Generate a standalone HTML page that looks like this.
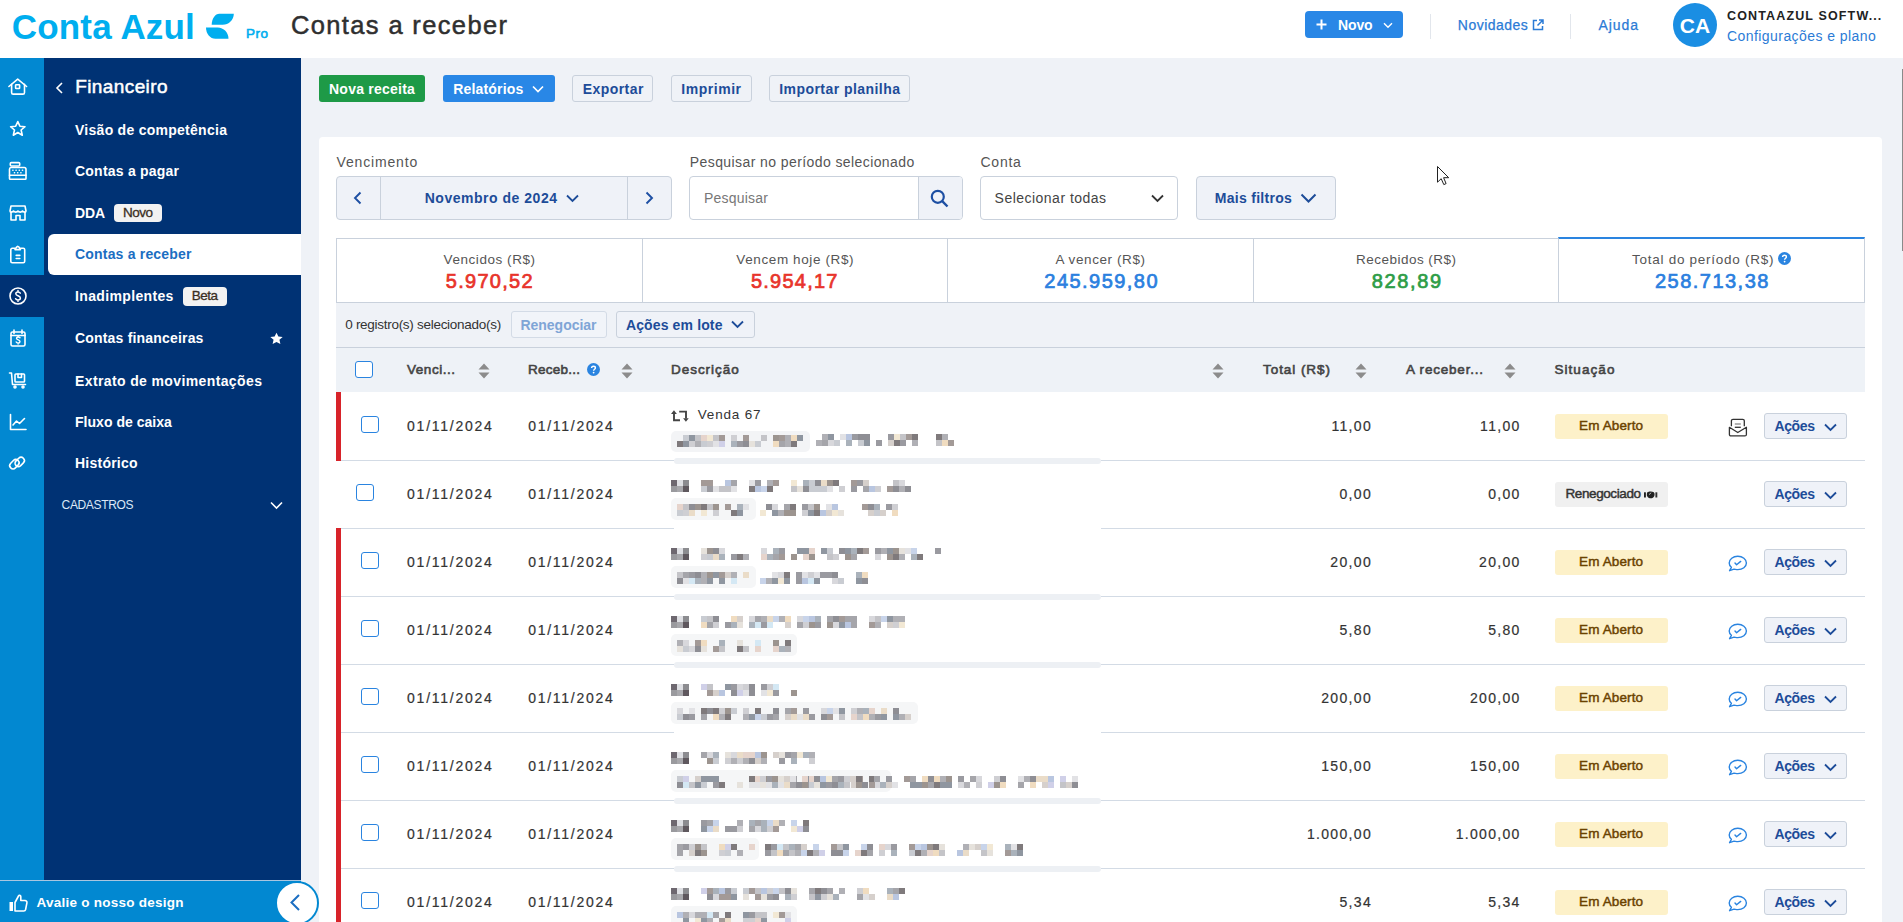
<!DOCTYPE html><html><head><meta charset="utf-8"><title>Contas a receber</title><style>
*{box-sizing:border-box;margin:0;padding:0}
html,body{width:1903px;height:922px;overflow:hidden;background:#eff2f7;font-family:"Liberation Sans",sans-serif}
.t{position:absolute;line-height:1;white-space:nowrap}
.r{position:absolute}
svg{position:absolute;overflow:visible}
</style></head><body><div class="r" style="left:0px;top:0px;width:1903px;height:58px;background:#ffffff;"></div><div class="r" style="left:0px;top:58px;width:44px;height:864px;background:#0288d1;"></div><div class="r" style="left:44px;top:58px;width:257px;height:864px;background:#003274;"></div><div class="r" style="left:0px;top:275px;width:44px;height:42px;background:#003274;"></div><div class="t" style="left:11.8px;top:8.85px;font-size:35px;color:#00aeef;font-weight:bold;letter-spacing:0.167px;">Conta Azul</div><svg style="left:0px;top:0px" width="1" height="1"><path d="M219.3 13.7H233.8C233.8 19.8 228.8 24.7 222.6 24.7H211.7C211.7 18.5 215.4 13.7 219.3 13.7Z" fill="#00aeef"/><path d="M206 27.4H217.6C223.8 27.4 228.5 32.4 228.5 38.7H215.5C210 38.7 206 33.6 206 27.4Z" fill="#00aeef"/></svg><div class="t" style="left:246.0px;top:27.23px;font-size:13.5px;color:#00aeef;font-weight:normal;letter-spacing:0.5px;-webkit-text-stroke:0.6px #00aeef">Pro</div><div class="t" style="left:291.0px;top:13.03px;font-size:25.5px;color:#2f2f2f;font-weight:normal;letter-spacing:1.358px;-webkit-text-stroke:0.5px #2f2f2f">Contas a receber</div><div class="r" style="left:1305px;top:11px;width:98px;height:27px;background:#2987e6;border-radius:4px"></div><svg style="left:1316px;top:19px" width="11" height="11" viewBox="0 0 11 11"><path d="M5.5 0.5V10.5M0.5 5.5H10.5" stroke="#fff" stroke-width="2"/></svg><div class="t" style="left:1338.0px;top:18.10px;font-size:14px;color:#fff;font-weight:bold;letter-spacing:-0.133px;">Novo</div><svg style="left:1383px;top:22px" width="10" height="7" viewBox="0 0 10 7"><path d="M1 1.2L5 5.2L9 1.2" stroke="#fff" stroke-width="1.4" fill="none"/></svg><div class="r" style="left:1430px;top:14px;width:1px;height:25px;background:#e2e6ec;"></div><div class="t" style="left:1457.8px;top:18.10px;font-size:14px;color:#2b7bd6;font-weight:normal;letter-spacing:0.484px;-webkit-text-stroke:0.25px #2b7bd6">Novidades</div><svg style="left:1532px;top:19px" width="12" height="12" viewBox="0 0 12 12"><path d="M5 1.5H1.5V10.5H10.5V7" stroke="#2b7bd6" stroke-width="1.5" fill="none"/><path d="M7 1H11V5M11 1L5.5 6.5" stroke="#2b7bd6" stroke-width="1.5" fill="none"/></svg><div class="r" style="left:1570px;top:14px;width:1px;height:25px;background:#e2e6ec;"></div><div class="t" style="left:1598.5px;top:18.10px;font-size:14px;color:#2b7bd6;font-weight:normal;letter-spacing:0.906px;-webkit-text-stroke:0.25px #2b7bd6">Ajuda</div><div class="r" style="left:1673px;top:3px;width:44px;height:44px;background:#1a8ee3;border-radius:50%"></div><div class="t" style="left:1395px;width:600px;text-align:center;top:15.15px;font-size:21px;color:#fff;font-weight:bold;">CA</div><div class="t" style="left:1727.0px;top:9.98px;font-size:12.5px;color:#222;font-weight:bold;letter-spacing:1.141px;">CONTAAZUL SOFTW...</div><div class="t" style="left:1727.0px;top:28.60px;font-size:14px;color:#2b7bd6;font-weight:normal;letter-spacing:0.434px;">Configurações e plano</div><svg style="left:8px;top:77px" width="20" height="20" viewBox="0 0 20 20" fill="none" stroke="#ffffff" stroke-width="1.6" stroke-linejoin="round" stroke-linecap="round"><path d="M0.9 9.5L9.7 2.2L18.6 9.5"/><path d="M3.6 7.3V15.4C3.6 16.3 4.3 17.1 5.2 17.1H14.9C15.8 17.1 16.5 16.3 16.5 15.4V7.3"/><rect x="7.6" y="7.7" width="4" height="3.8" rx="0.6"/></svg><svg style="left:8px;top:119px" width="20" height="20" viewBox="0 0 20 20" fill="none" stroke="#ffffff" stroke-width="1.6" stroke-linejoin="round" stroke-linecap="round"><path d="M9.8 2.6L11.9 7.2L17 7.7L13.1 11L14.3 16.2L9.8 13.5L5.3 16.2L6.5 11L2.6 7.7L7.7 7.2Z"/></svg><svg style="left:8px;top:161px" width="20" height="20" viewBox="0 0 20 20" fill="none" stroke="#ffffff" stroke-width="1.6" stroke-linejoin="round" stroke-linecap="round"><rect x="2.3" y="1.6" width="9.4" height="3.4" rx="1"/><path d="M3 6.5H16.3C17.2 6.5 18 7.3 18 8.2V17.5C18 18 17.6 18.3 17.2 18.3H2.3C1.9 18.3 1.5 18 1.5 17.5V8.2C1.5 7.3 2.2 6.5 3 6.5Z"/><path d="M1.5 14.3H18"/><path d="M4.8 9.3h0.2M8 9.3h0.2M11.2 9.3h0.2M14.4 9.3h0.2M6.4 11.7h0.2M9.6 11.7h0.2M12.8 11.7h0.2" stroke-width="1.5"/></svg><svg style="left:8px;top:203px" width="20" height="20" viewBox="0 0 20 20" fill="none" stroke="#ffffff" stroke-width="1.6" stroke-linejoin="round" stroke-linecap="round"><path d="M3 3H17L18 8C18 9.5 15.5 9.5 14.5 8C13.5 9.5 11 9.5 10 8C9 9.5 6.5 9.5 5.5 8C4.5 9.5 2 9.5 2 8Z"/><path d="M3 9V17H8V12.5H12V17H17V9"/></svg><svg style="left:8px;top:244px" width="20" height="20" viewBox="0 0 20 20" fill="none" stroke="#ffffff" stroke-width="1.6" stroke-linejoin="round" stroke-linecap="round"><path d="M7 4.3H4.2C3.4 4.3 2.8 4.9 2.8 5.7V17.3C2.8 18.1 3.4 18.7 4.2 18.7H15.3C16.1 18.7 16.7 18.1 16.7 17.3V5.7C16.7 4.9 16.1 4.3 15.3 4.3H12.5"/><path d="M7 5.6H12.5L11 3.2L9.7 2.3L8.5 3.2Z"/><path d="M8.2 11.4H11.8M8.2 14.5H11.8"/></svg><svg style="left:8px;top:286px" width="20" height="20" viewBox="0 0 20 20" fill="none" stroke="#ffffff" stroke-width="1.6" stroke-linejoin="round" stroke-linecap="round"><circle cx="10" cy="10" r="8"/><path d="M12.3 7.2C11.8 6.4 11 6 10 6C8.7 6 7.8 6.7 7.8 7.8C7.8 10.2 12.4 9.3 12.4 12C12.4 13.2 11.4 14 10 14C8.9 14 8 13.5 7.6 12.7M10 4.5V6M10 14V15.5" stroke-width="1.5"/></svg><svg style="left:8px;top:328px" width="20" height="20" viewBox="0 0 20 20" fill="none" stroke="#ffffff" stroke-width="1.6" stroke-linejoin="round" stroke-linecap="round"><rect x="3" y="4" width="14" height="14" rx="1.5"/><path d="M6 2V5.5M14 2V5.5M3 7.5H17"/><path d="M12 9.8C11.6 9.3 11 9 10.2 9C9.2 9 8.5 9.5 8.5 10.3C8.5 12.2 12 11.5 12 13.4C12 14.3 11.2 15 10.1 15C9.2 15 8.5 14.6 8.2 14M10.1 8V9M10.1 15V16" stroke-width="1.4"/></svg><svg style="left:8px;top:370px" width="20" height="20" viewBox="0 0 20 20" fill="none" stroke="#ffffff" stroke-width="1.6" stroke-linejoin="round" stroke-linecap="round"><path d="M1.5 3H3.5L4.5 14.5H17.5"/><rect x="7" y="4" width="9.5" height="8" rx="0.8"/><path d="M10 4V7.5H13.5V4" /><circle cx="7" cy="17" r="1" /><circle cx="15" cy="17" r="1"/></svg><svg style="left:8px;top:412px" width="20" height="20" viewBox="0 0 20 20" fill="none" stroke="#ffffff" stroke-width="1.6" stroke-linejoin="round" stroke-linecap="round"><path d="M2.5 2.5V17.5H18"/><path d="M5 13L8.5 9L11.5 11.5L16.5 6.5"/></svg><svg style="left:8px;top:454px" width="20" height="20" viewBox="0 0 20 20" fill="none" stroke="#ffffff" stroke-width="1.6" stroke-linejoin="round" stroke-linecap="round"><rect x="1.2" y="6.9" width="10.4" height="6.6" rx="3.3" transform="rotate(-45 6.4 10.2)"/><rect x="6.5" y="4.6" width="10.4" height="6.6" rx="3.3" transform="rotate(-45 11.7 7.9)"/></svg><svg style="left:55px;top:81.5px" width="9" height="12" viewBox="0 0 9 12"><path d="M7 1L2 6L7 11" stroke="#fff" stroke-width="1.6" fill="none"/></svg><div class="t" style="left:75.2px;top:76.95px;font-size:19px;color:#fff;font-weight:normal;letter-spacing:0.406px;-webkit-text-stroke:0.5px #fff">Financeiro</div><div class="r" style="left:48px;top:234px;width:253px;height:41px;background:#ffffff;border-radius:6px 0 0 6px"></div><div class="t" style="left:75.0px;top:122.50px;font-size:14px;color:#ffffff;font-weight:bold;letter-spacing:0.27px;">Visão de competência</div><div class="t" style="left:75.0px;top:164.30px;font-size:14px;color:#ffffff;font-weight:bold;letter-spacing:0.221px;">Contas a pagar</div><div class="t" style="left:75.0px;top:206.20px;font-size:14px;color:#ffffff;font-weight:bold;letter-spacing:-0.088px;">DDA</div><div class="t" style="left:75.0px;top:247.10px;font-size:14px;color:#1b6ec2;font-weight:bold;letter-spacing:0.192px;">Contas a receber</div><div class="t" style="left:75.0px;top:289.10px;font-size:14px;color:#ffffff;font-weight:bold;letter-spacing:0.356px;">Inadimplentes</div><div class="t" style="left:75.0px;top:330.90px;font-size:14px;color:#ffffff;font-weight:bold;letter-spacing:0.185px;">Contas financeiras</div><div class="t" style="left:75.0px;top:373.50px;font-size:14px;color:#ffffff;font-weight:bold;letter-spacing:0.38px;">Extrato de movimentações</div><div class="t" style="left:75.0px;top:415.10px;font-size:14px;color:#ffffff;font-weight:bold;letter-spacing:0.029px;">Fluxo de caixa</div><div class="t" style="left:75.0px;top:456.10px;font-size:14px;color:#ffffff;font-weight:bold;letter-spacing:0.234px;">Histórico</div><div class="r" style="left:114px;top:204px;width:48px;height:18px;background:#f2f2f2;border-radius:4px"></div><div class="t" style="left:123.0px;top:205.83px;font-size:13.5px;color:#3a2e22;font-weight:normal;letter-spacing:-0.5px;-webkit-text-stroke:0.3px #3a2e22">Novo</div><div class="r" style="left:183px;top:287px;width:44px;height:19px;background:#f2f2f2;border-radius:4px"></div><div class="t" style="left:191.8px;top:289.02px;font-size:13.5px;color:#3a2e22;font-weight:normal;letter-spacing:-0.558px;-webkit-text-stroke:0.3px #3a2e22">Beta</div><svg style="left:270px;top:331.5px" width="13" height="13" viewBox="0 0 20 20"><path d="M10 1L12.9 7.1L19.5 7.6L14.5 12L16 18.6L10 15.2L4 18.6L5.5 12L0.5 7.6L7.1 7.1Z" fill="#fff"/></svg><div class="t" style="left:61.6px;top:498.80px;font-size:12px;color:#dbe8f7;font-weight:normal;letter-spacing:-0.353px;">CADASTROS</div><svg style="left:270px;top:501px" width="13" height="9" viewBox="0 0 13 9"><path d="M1 1.5L6.5 7L12 1.5" stroke="#fff" stroke-width="1.6" fill="none"/></svg><div class="r" style="left:0px;top:880px;width:301px;height:42px;background:#0288d1;border-top:1px solid #a9c6e0"></div><svg style="left:9px;top:894px" width="19" height="18" viewBox="0 0 19 18"><rect x="0.5" y="8" width="3.5" height="9" fill="#fff"/><path d="M6 8.5L9.5 2C10 1 11.8 1.2 11.8 2.6V6.5H16C17.3 6.5 18.2 7.6 17.9 8.8L16.6 15.5C16.4 16.4 15.7 17 14.8 17H6Z" stroke="#fff" stroke-width="1.6" fill="none" stroke-linejoin="round"/></svg><div class="t" style="left:36.4px;top:895.82px;font-size:13.5px;color:#fff;font-weight:bold;letter-spacing:0.25px;">Avalie o nosso design</div><svg style="left:275px;top:881px" width="44" height="44" viewBox="0 0 44 44"><circle cx="22" cy="22" r="21" fill="#fff" stroke="#0288d1" stroke-width="2"/><path d="M24 14L16.5 21.5L24 29" stroke="#1b6ec2" stroke-width="2" fill="none"/></svg><div class="r" style="left:319px;top:75px;width:106px;height:27px;background:#1e9a47;border-radius:3px"></div><div class="t" style="left:329.0px;top:81.64px;font-size:14px;color:#fff;font-weight:bold;letter-spacing:0.239px;">Nova receita</div><div class="r" style="left:443px;top:75px;width:112px;height:27px;background:#2987e6;border-radius:3px"></div><div class="t" style="left:453.3px;top:81.64px;font-size:14px;color:#fff;font-weight:bold;letter-spacing:0.167px;">Relatórios</div><svg style="left:532px;top:85.0px" width="12" height="8" viewBox="0 0 12 8"><path d="M1 1.5L6 6.5L11 1.5" stroke="#fff" stroke-width="1.7" fill="none"/></svg><div class="r" style="left:572px;top:75px;width:81px;height:27px;background:#eff2f7;border:1px solid #c9d1dc;border-radius:3px"></div><div class="t" style="left:582.7px;top:81.64px;font-size:14px;color:#1d4c99;font-weight:bold;letter-spacing:0.439px;">Exportar</div><div class="r" style="left:671px;top:75px;width:81px;height:27px;background:#eff2f7;border:1px solid #c9d1dc;border-radius:3px"></div><div class="t" style="left:681.3px;top:81.64px;font-size:14px;color:#1d4c99;font-weight:bold;letter-spacing:0.529px;">Imprimir</div><div class="r" style="left:769px;top:75px;width:141px;height:27px;background:#eff2f7;border:1px solid #c9d1dc;border-radius:3px"></div><div class="t" style="left:779.2px;top:81.64px;font-size:14px;color:#1d4c99;font-weight:bold;letter-spacing:0.448px;">Importar planilha</div><div class="r" style="left:319px;top:137px;width:1563px;height:800px;background:#ffffff;border-radius:4px"></div><div class="t" style="left:336.5px;top:155.30px;font-size:14px;color:#555;font-weight:normal;letter-spacing:0.842px;">Vencimento</div><div class="t" style="left:689.8px;top:155.30px;font-size:14px;color:#555;font-weight:normal;letter-spacing:0.411px;">Pesquisar no período selecionado</div><div class="t" style="left:980.5px;top:155.30px;font-size:14px;color:#555;font-weight:normal;letter-spacing:0.75px;">Conta</div><div class="r" style="left:336px;top:176px;width:336px;height:44px;background:#eff2f8;border:1px solid #c9d1dc;border-radius:4px"></div><div class="r" style="left:380px;top:177px;width:1px;height:42px;background:#c9d1dc;"></div><div class="r" style="left:627px;top:177px;width:1px;height:42px;background:#c9d1dc;"></div><svg style="left:353px;top:191px" width="9" height="14" viewBox="0 0 9 14"><path d="M7.5 1.5L2 7L7.5 12.5" stroke="#1d4fa3" stroke-width="1.9" fill="none"/></svg><svg style="left:645px;top:191px" width="9" height="14" viewBox="0 0 9 14"><path d="M1.5 1.5L7 7L1.5 12.5" stroke="#1d4fa3" stroke-width="1.9" fill="none"/></svg><div class="t" style="left:424.7px;top:191.10px;font-size:14px;color:#1d4c99;font-weight:bold;letter-spacing:0.52px;">Novembro de 2024</div><svg style="left:566px;top:194px" width="13" height="9" viewBox="0 0 13 9"><path d="M1 1.5L6.5 7L12 1.5" stroke="#1d4c99" stroke-width="1.8" fill="none"/></svg><div class="r" style="left:689px;top:176px;width:274px;height:44px;background:#ffffff;border:1px solid #c9d1dc;border-radius:4px"></div><div class="r" style="left:918px;top:177px;width:44px;height:42px;background:#eff2f8;border-left:1px solid #c9d1dc;border-radius:0 3px 3px 0"></div><div class="t" style="left:704.0px;top:191.10px;font-size:14px;color:#777;font-weight:normal;letter-spacing:0.219px;">Pesquisar</div><svg style="left:930px;top:189px" width="19" height="19" viewBox="0 0 19 19"><circle cx="7.8" cy="7.8" r="6" stroke="#1d4fa3" stroke-width="2.2" fill="none"/><path d="M12.2 12.2L17.5 17.5" stroke="#1d4fa3" stroke-width="2.4"/></svg><div class="r" style="left:980px;top:176px;width:198px;height:44px;background:#ffffff;border:1px solid #c9d1dc;border-radius:4px"></div><div class="t" style="left:994.6px;top:191.10px;font-size:14px;color:#444;font-weight:normal;letter-spacing:0.477px;">Selecionar todas</div><svg style="left:1151px;top:194px" width="13" height="9" viewBox="0 0 13 9"><path d="M1 1.5L6.5 7L12 1.5" stroke="#333" stroke-width="1.8" fill="none"/></svg><div class="r" style="left:1196px;top:176px;width:140px;height:44px;background:#eff2f8;border:1px solid #c9d1dc;border-radius:4px"></div><div class="t" style="left:1214.8px;top:191.10px;font-size:14px;color:#1d4c99;font-weight:bold;letter-spacing:0.284px;">Mais filtros</div><svg style="left:1300px;top:193px" width="17" height="11" viewBox="0 0 17 11"><path d="M1.5 1.5L8.5 8.5L15.5 1.5" stroke="#1d4c99" stroke-width="2" fill="none"/></svg><svg style="left:1437px;top:166px" width="14" height="21" viewBox="0 0 14 21"><path d="M0.5 0.5V16.2L4.2 12.7L6.8 18.6L9.1 17.6L6.6 11.7H11.7Z" fill="#fff" stroke="#222" stroke-width="1" stroke-linejoin="miter"/></svg><div class="r" style="left:336px;top:238px;width:1529px;height:65px;background:#ffffff;border:1px solid #c9d1dc"></div><div class="r" style="left:642px;top:238px;width:1px;height:65px;background:#c9d1dc;"></div><div class="r" style="left:947px;top:238px;width:1px;height:65px;background:#c9d1dc;"></div><div class="r" style="left:1253px;top:238px;width:1px;height:65px;background:#c9d1dc;"></div><div class="r" style="left:1558px;top:237px;width:307px;height:66px;background:none;border:1px solid #c9d1dc;border-top:2px solid #2a84e0"></div><div class="t" style="left:443.6px;top:252.72px;font-size:13.5px;color:#555;font-weight:normal;letter-spacing:0.554px;">Vencidos (R$)</div><div class="t" style="left:445.8px;top:271.00px;font-size:20px;color:#e8342b;font-weight:normal;letter-spacing:1.275px;-webkit-text-stroke:0.7px #e8342b">5.970,52</div><div class="t" style="left:736.3px;top:252.72px;font-size:13.5px;color:#555;font-weight:normal;letter-spacing:0.613px;">Vencem hoje (R$)</div><div class="t" style="left:751.0px;top:271.00px;font-size:20px;color:#e8342b;font-weight:normal;letter-spacing:1.218px;-webkit-text-stroke:0.7px #e8342b">5.954,17</div><div class="t" style="left:1055.4px;top:252.72px;font-size:13.5px;color:#555;font-weight:normal;letter-spacing:0.592px;">A vencer (R$)</div><div class="t" style="left:1044.3px;top:271.00px;font-size:20px;color:#2b80df;font-weight:normal;letter-spacing:1.464px;-webkit-text-stroke:0.7px #2b80df">245.959,80</div><div class="t" style="left:1356.0px;top:252.72px;font-size:13.5px;color:#555;font-weight:normal;letter-spacing:0.481px;">Recebidos (R$)</div><div class="t" style="left:1371.7px;top:271.00px;font-size:20px;color:#2e9d47;font-weight:normal;letter-spacing:1.635px;-webkit-text-stroke:0.7px #2e9d47">828,89</div><div class="t" style="left:1632.0px;top:252.72px;font-size:13.5px;color:#555;font-weight:normal;letter-spacing:0.731px;">Total do período (R$)</div><div class="t" style="left:1655.0px;top:271.00px;font-size:20px;color:#2b80df;font-weight:normal;letter-spacing:1.475px;-webkit-text-stroke:0.7px #2b80df">258.713,38</div><svg style="left:1778px;top:252px" width="13" height="13" viewBox="0 0 13 13"><circle cx="6.5" cy="6.5" r="6.5" fill="#2a84e0"/><path d="M4.6 5C4.6 3.9 5.4 3.2 6.5 3.2C7.6 3.2 8.4 3.9 8.4 4.9C8.4 6.2 6.6 6.3 6.6 7.7" stroke="#fff" stroke-width="1.4" fill="none"/><circle cx="6.6" cy="9.6" r="0.9" fill="#fff"/></svg><div class="r" style="left:336px;top:303px;width:1529px;height:45px;background:#eff2f7;border-bottom:1px solid #c9d1dc"></div><div class="t" style="left:345.2px;top:318.02px;font-size:13.5px;color:#333;font-weight:normal;letter-spacing:-0.282px;">0 registro(s) selecionado(s)</div><div class="r" style="left:511px;top:311px;width:96px;height:27px;background:#f1f4f9;border:1px solid #d3dbe6;border-radius:3px"></div><div class="t" style="left:520.5px;top:317.60px;font-size:14px;color:#7fa5d6;font-weight:bold;letter-spacing:-0.028px;">Renegociar</div><div class="r" style="left:616px;top:311px;width:139px;height:27px;background:#eff2f8;border:1px solid #c9d1dc;border-radius:3px"></div><div class="t" style="left:625.9px;top:317.60px;font-size:14px;color:#1d4c99;font-weight:bold;letter-spacing:0.135px;">Ações em lote</div><svg style="left:731px;top:320px" width="13" height="9" viewBox="0 0 13 9"><path d="M1 1.5L6.5 7L12 1.5" stroke="#1d4c99" stroke-width="1.8" fill="none"/></svg><div class="r" style="left:336px;top:348px;width:1529px;height:44px;background:#eef2f7;"></div><div class="r" style="left:355px;top:361px;width:18px;height:17px;background:#fff;border:1.5px solid #2a84e0;border-radius:3px"></div><div class="t" style="left:407.0px;top:362.72px;font-size:13.5px;color:#444;font-weight:normal;letter-spacing:0.536px;-webkit-text-stroke:0.6px #444">Venci...</div><svg style="left:478px;top:363px" width="12" height="16" viewBox="0 0 12 16"><path d="M6 0.5L11.5 6.5H0.5Z M6 15.5L11.5 9.5H0.5Z" fill="#8c8c8c"/></svg><div class="t" style="left:528.0px;top:362.72px;font-size:13.5px;color:#444;font-weight:normal;letter-spacing:0.25px;-webkit-text-stroke:0.6px #444">Receb...</div><svg style="left:587px;top:363px" width="13" height="13" viewBox="0 0 13 13"><circle cx="6.5" cy="6.5" r="6.5" fill="#2a84e0"/><path d="M4.6 5C4.6 3.9 5.4 3.2 6.5 3.2C7.6 3.2 8.4 3.9 8.4 4.9C8.4 6.2 6.6 6.3 6.6 7.7" stroke="#fff" stroke-width="1.4" fill="none"/><circle cx="6.6" cy="9.6" r="0.9" fill="#fff"/></svg><svg style="left:621px;top:363px" width="12" height="16" viewBox="0 0 12 16"><path d="M6 0.5L11.5 6.5H0.5Z M6 15.5L11.5 9.5H0.5Z" fill="#8c8c8c"/></svg><div class="t" style="left:671.0px;top:362.72px;font-size:13.5px;color:#444;font-weight:normal;letter-spacing:0.963px;-webkit-text-stroke:0.6px #444">Descrição</div><svg style="left:1212px;top:363px" width="12" height="16" viewBox="0 0 12 16"><path d="M6 0.5L11.5 6.5H0.5Z M6 15.5L11.5 9.5H0.5Z" fill="#8c8c8c"/></svg><div class="t" style="left:1263.0px;top:362.72px;font-size:13.5px;color:#444;font-weight:normal;letter-spacing:0.944px;-webkit-text-stroke:0.6px #444">Total (R$)</div><svg style="left:1355px;top:363px" width="12" height="16" viewBox="0 0 12 16"><path d="M6 0.5L11.5 6.5H0.5Z M6 15.5L11.5 9.5H0.5Z" fill="#8c8c8c"/></svg><div class="t" style="left:1406.0px;top:362.72px;font-size:13.5px;color:#444;font-weight:normal;letter-spacing:0.795px;-webkit-text-stroke:0.6px #444">A receber...</div><svg style="left:1504px;top:363px" width="12" height="16" viewBox="0 0 12 16"><path d="M6 0.5L11.5 6.5H0.5Z M6 15.5L11.5 9.5H0.5Z" fill="#8c8c8c"/></svg><div class="t" style="left:1554.4px;top:362.72px;font-size:13.5px;color:#444;font-weight:normal;letter-spacing:1.071px;-webkit-text-stroke:0.6px #444">Situação</div><div class="r" style="left:336px;top:392px;width:1529px;height:68px;background:#ffffff;"></div><div class="r" style="left:336px;top:392px;width:5px;height:69px;background:#d8232a;"></div><div class="r" style="left:361px;top:416px;width:18px;height:17px;background:#fff;border:1.5px solid #2a84e0;border-radius:3px"></div><div class="t" style="left:407.1px;top:419.10px;font-size:14px;color:#333;font-weight:normal;letter-spacing:1.733px;-webkit-text-stroke:0.2px #333">01/11/2024</div><div class="t" style="left:528.2px;top:419.10px;font-size:14px;color:#333;font-weight:normal;letter-spacing:1.733px;-webkit-text-stroke:0.2px #333">01/11/2024</div><div class="r" style="left:670px;top:392px;width:432px;height:68px;background:#ffffff;"></div><svg style="left:664px;top:402px" width="30" height="24" viewBox="0 0 30 24"><path d="M10 11.5V18.3H16" stroke="#444" stroke-width="1.9" fill="none"/><path d="M7 12L9.95 8.2L12.9 12Z" fill="#444"/><path d="M15.2 9.6H22V16.6" stroke="#444" stroke-width="1.9" fill="none"/><path d="M19.1 16.2L21.9 19.7L24.7 16.2Z" fill="#444"/></svg><div class="t" style="left:697.8px;top:407.52px;font-size:13.5px;color:#333;font-weight:normal;letter-spacing:0.814px;">Venda 67</div><div class="r" style="left:671px;top:431px;width:139px;height:21px;background:#f3f4f6;border-radius:5px"></div><svg style="left:677px;top:435px" width="126" height="12"><rect x="0" y="6" width="6" height="6" fill="#7f7a7c"/><rect x="6" y="0" width="6" height="6" fill="#c9ccd2"/><rect x="6" y="6" width="6" height="6" fill="#8f96a0"/><rect x="12" y="0" width="6" height="6" fill="#8f96a0"/><rect x="12" y="6" width="6" height="6" fill="#cfcfd3"/><rect x="18" y="0" width="6" height="6" fill="#c4c4c8"/><rect x="18" y="6" width="6" height="6" fill="#b0b0b5"/><rect x="24" y="0" width="6" height="6" fill="#e6d4cc"/><rect x="24" y="6" width="6" height="6" fill="#c9ccd2"/><rect x="30" y="0" width="6" height="6" fill="#f2e8d4"/><rect x="30" y="6" width="6" height="6" fill="#cfcfd3"/><rect x="36" y="0" width="6" height="6" fill="#c4c4c8"/><rect x="36" y="6" width="6" height="6" fill="#e2e2e5"/><rect x="42" y="0" width="6" height="6" fill="#a39a97"/><rect x="42" y="6" width="6" height="6" fill="#d0d0e8"/><rect x="54" y="0" width="6" height="6" fill="#cfcfd3"/><rect x="54" y="6" width="6" height="6" fill="#aab2bb"/><rect x="60" y="6" width="6" height="6" fill="#9a9aa0"/><rect x="66" y="0" width="6" height="6" fill="#a39a97"/><rect x="66" y="6" width="6" height="6" fill="#8e8e94"/><rect x="72" y="6" width="6" height="6" fill="#e6e2dc"/><rect x="78" y="6" width="6" height="6" fill="#c9ccd2"/><rect x="84" y="0" width="6" height="6" fill="#c4c4c8"/><rect x="96" y="0" width="6" height="6" fill="#9c948f"/><rect x="96" y="6" width="6" height="6" fill="#f0dcc0"/><rect x="102" y="0" width="6" height="6" fill="#a39a97"/><rect x="102" y="6" width="6" height="6" fill="#a5a5aa"/><rect x="108" y="0" width="6" height="6" fill="#b0b0b5"/><rect x="108" y="6" width="6" height="6" fill="#b0b0b5"/><rect x="114" y="0" width="6" height="6" fill="#f0dcc0"/><rect x="114" y="6" width="6" height="6" fill="#7f7a7c"/><rect x="120" y="0" width="6" height="6" fill="#8f96a0"/></svg><svg style="left:816px;top:434px" width="138" height="12"><rect x="0" y="6" width="6" height="6" fill="#b0b0b5"/><rect x="6" y="0" width="6" height="6" fill="#b0b0b5"/><rect x="6" y="6" width="6" height="6" fill="#a5a5aa"/><rect x="12" y="0" width="6" height="6" fill="#8f96a0"/><rect x="12" y="6" width="6" height="6" fill="#d8d8dc"/><rect x="18" y="6" width="6" height="6" fill="#c9ccd2"/><rect x="24" y="0" width="6" height="6" fill="#e2e2e5"/><rect x="30" y="0" width="6" height="6" fill="#b9c6e0"/><rect x="30" y="6" width="6" height="6" fill="#aab2bb"/><rect x="36" y="0" width="6" height="6" fill="#9a9aa0"/><rect x="42" y="0" width="6" height="6" fill="#8e8e94"/><rect x="42" y="6" width="6" height="6" fill="#c9ccd2"/><rect x="48" y="0" width="6" height="6" fill="#8e8e94"/><rect x="48" y="6" width="6" height="6" fill="#8f96a0"/><rect x="60" y="6" width="6" height="6" fill="#9a9aa0"/><rect x="72" y="0" width="6" height="6" fill="#9a9aa0"/><rect x="72" y="6" width="6" height="6" fill="#d6d0cc"/><rect x="78" y="0" width="6" height="6" fill="#f2e8d4"/><rect x="78" y="6" width="6" height="6" fill="#7f7a7c"/><rect x="84" y="0" width="6" height="6" fill="#c4c4c8"/><rect x="84" y="6" width="6" height="6" fill="#9a9aa0"/><rect x="90" y="0" width="6" height="6" fill="#a39a97"/><rect x="96" y="0" width="6" height="6" fill="#7f7a7c"/><rect x="96" y="6" width="6" height="6" fill="#b0b0b5"/><rect x="120" y="0" width="6" height="6" fill="#7f7a7c"/><rect x="120" y="6" width="6" height="6" fill="#c4c4c8"/><rect x="126" y="0" width="6" height="6" fill="#b0b0b5"/><rect x="126" y="6" width="6" height="6" fill="#f0dcc0"/><rect x="132" y="6" width="6" height="6" fill="#a39a97"/></svg><div class="t" style="right:530.97px;top:419.10px;font-size:14px;color:#333;font-weight:normal;letter-spacing:1.325px;-webkit-text-stroke:0.2px #333">11,00</div><div class="t" style="right:382.27px;top:419.10px;font-size:14px;color:#333;font-weight:normal;letter-spacing:1.325px;-webkit-text-stroke:0.2px #333">11,00</div><div class="r" style="left:1555px;top:413.5px;width:113px;height:25px;background:#fdf1c9;border-radius:3px"></div><div class="t" style="left:1579.0px;top:419.02px;font-size:13.5px;color:#6b4200;font-weight:normal;letter-spacing:0.125px;-webkit-text-stroke:0.45px #6b4200">Em Aberto</div><svg style="left:1728px;top:417px" width="20" height="20" viewBox="0 0 20 20" fill="none" stroke="#333" stroke-width="1.3" stroke-linejoin="round"><path d="M3.4 9.2V3.8C3.4 2.9 4.1 2.3 5 2.3H14.7C15.6 2.3 16.3 2.9 16.3 3.8V9.2"/><path d="M6.8 7H12.8" stroke="#888"/><path d="M6.8 10.3H12.8"/><path d="M1.4 10.3L9.8 15.5L18.4 10.3V17.4C18.4 18.3 17.8 18.9 16.9 18.9H2.9C2 18.9 1.4 18.3 1.4 17.4Z"/></svg><div class="r" style="left:1764px;top:413px;width:83px;height:26px;background:#eff2f8;border:1px solid #c9d1dc;border-radius:3px"></div><div class="t" style="left:1774.4px;top:418.60px;font-size:14px;color:#1d4c99;font-weight:bold;letter-spacing:-0.35px;">Ações</div><svg style="left:1824px;top:423px" width="13" height="9" viewBox="0 0 13 9"><path d="M1 1.5L6.5 7L12 1.5" stroke="#1d4c99" stroke-width="1.8" fill="none"/></svg><div class="r" style="left:336px;top:460px;width:1529px;height:68px;background:#ffffff;"></div><div class="r" style="left:356px;top:484px;width:18px;height:17px;background:#fff;border:1.5px solid #2a84e0;border-radius:3px"></div><div class="t" style="left:407.1px;top:487.10px;font-size:14px;color:#333;font-weight:normal;letter-spacing:1.733px;-webkit-text-stroke:0.2px #333">01/11/2024</div><div class="t" style="left:528.2px;top:487.10px;font-size:14px;color:#333;font-weight:normal;letter-spacing:1.733px;-webkit-text-stroke:0.2px #333">01/11/2024</div><div class="r" style="left:670px;top:460px;width:432px;height:68px;background:#ffffff;"></div><svg style="left:671px;top:480px" width="240" height="12"><rect x="0" y="0" width="6" height="6" fill="#6e6870"/><rect x="6" y="0" width="6" height="6" fill="#dfe0e4"/><rect x="12" y="0" width="6" height="6" fill="#8c8c90"/><rect x="0" y="6" width="6" height="6" fill="#9a9a9e"/><rect x="6" y="6" width="6" height="6" fill="#a8a8ac"/><rect x="12" y="6" width="6" height="6" fill="#5f585e"/><rect x="30" y="0" width="6" height="6" fill="#a39a97"/><rect x="30" y="6" width="6" height="6" fill="#c9ccd2"/><rect x="36" y="0" width="6" height="6" fill="#a39a97"/><rect x="36" y="6" width="6" height="6" fill="#9a9aa0"/><rect x="42" y="6" width="6" height="6" fill="#e2e2e5"/><rect x="48" y="6" width="6" height="6" fill="#c4c4c8"/><rect x="54" y="0" width="6" height="6" fill="#b9c6e0"/><rect x="54" y="6" width="6" height="6" fill="#c4c4c8"/><rect x="60" y="0" width="6" height="6" fill="#a5a5aa"/><rect x="60" y="6" width="6" height="6" fill="#e2e2e5"/><rect x="78" y="0" width="6" height="6" fill="#e2e2e5"/><rect x="78" y="6" width="6" height="6" fill="#7f7a7c"/><rect x="84" y="0" width="6" height="6" fill="#9a9aa0"/><rect x="84" y="6" width="6" height="6" fill="#b9c6e0"/><rect x="90" y="6" width="6" height="6" fill="#c8d4ea"/><rect x="96" y="0" width="6" height="6" fill="#b0b0b5"/><rect x="96" y="6" width="6" height="6" fill="#7f7a7c"/><rect x="102" y="0" width="6" height="6" fill="#a39a97"/><rect x="120" y="0" width="6" height="6" fill="#f2e8d4"/><rect x="120" y="6" width="6" height="6" fill="#c4c4c8"/><rect x="126" y="6" width="6" height="6" fill="#e6e2dc"/><rect x="132" y="0" width="6" height="6" fill="#aab2bb"/><rect x="132" y="6" width="6" height="6" fill="#8e8e94"/><rect x="138" y="0" width="6" height="6" fill="#c9ccd2"/><rect x="138" y="6" width="6" height="6" fill="#c9ccd2"/><rect x="144" y="0" width="6" height="6" fill="#8e8e94"/><rect x="144" y="6" width="6" height="6" fill="#c9ccd2"/><rect x="150" y="0" width="6" height="6" fill="#eadcc8"/><rect x="150" y="6" width="6" height="6" fill="#c9ccd2"/><rect x="156" y="0" width="6" height="6" fill="#9c948f"/><rect x="156" y="6" width="6" height="6" fill="#e2e2e5"/><rect x="162" y="0" width="6" height="6" fill="#7f7a7c"/><rect x="168" y="6" width="6" height="6" fill="#cfcfd3"/><rect x="180" y="0" width="6" height="6" fill="#a39a97"/><rect x="180" y="6" width="6" height="6" fill="#9a9aa0"/><rect x="186" y="0" width="6" height="6" fill="#9a9aa0"/><rect x="192" y="0" width="6" height="6" fill="#d6d0cc"/><rect x="192" y="6" width="6" height="6" fill="#a5a5aa"/><rect x="198" y="6" width="6" height="6" fill="#b9c6e0"/><rect x="204" y="6" width="6" height="6" fill="#cfcfd3"/><rect x="216" y="6" width="6" height="6" fill="#a39a97"/><rect x="222" y="0" width="6" height="6" fill="#c4c4c8"/><rect x="222" y="6" width="6" height="6" fill="#8e8e94"/><rect x="228" y="0" width="6" height="6" fill="#d8d8dc"/><rect x="228" y="6" width="6" height="6" fill="#b0b0b5"/><rect x="234" y="6" width="6" height="6" fill="#8e8e94"/></svg><div class="r" style="left:671px;top:498px;width:85px;height:22px;background:#f5f6f7;border-radius:5px"></div><svg style="left:677px;top:504px" width="72" height="12"><rect x="0" y="0" width="6" height="6" fill="#e6d4cc"/><rect x="0" y="6" width="6" height="6" fill="#c9ccd2"/><rect x="6" y="0" width="6" height="6" fill="#c4c4c8"/><rect x="6" y="6" width="6" height="6" fill="#cfcfd3"/><rect x="12" y="0" width="6" height="6" fill="#8e8e94"/><rect x="12" y="6" width="6" height="6" fill="#eadcc8"/><rect x="18" y="0" width="6" height="6" fill="#9c948f"/><rect x="24" y="0" width="6" height="6" fill="#7f7a7c"/><rect x="24" y="6" width="6" height="6" fill="#f2e8d4"/><rect x="30" y="0" width="6" height="6" fill="#c4c4c8"/><rect x="36" y="0" width="6" height="6" fill="#9c948f"/><rect x="36" y="6" width="6" height="6" fill="#cfcfd3"/><rect x="48" y="0" width="6" height="6" fill="#a39a97"/><rect x="54" y="6" width="6" height="6" fill="#7f7a7c"/><rect x="60" y="0" width="6" height="6" fill="#aab2bb"/><rect x="60" y="6" width="6" height="6" fill="#8f96a0"/><rect x="66" y="0" width="6" height="6" fill="#e2e2e5"/></svg><svg style="left:760px;top:504px" width="138" height="12"><rect x="0" y="6" width="6" height="6" fill="#f2e8d4"/><rect x="6" y="0" width="6" height="6" fill="#8e8e94"/><rect x="12" y="0" width="6" height="6" fill="#d8d8dc"/><rect x="12" y="6" width="6" height="6" fill="#8f96a0"/><rect x="18" y="6" width="6" height="6" fill="#b0b0b5"/><rect x="24" y="0" width="6" height="6" fill="#a5a5aa"/><rect x="24" y="6" width="6" height="6" fill="#9c948f"/><rect x="30" y="0" width="6" height="6" fill="#7f7a7c"/><rect x="30" y="6" width="6" height="6" fill="#9c948f"/><rect x="42" y="0" width="6" height="6" fill="#9a9aa0"/><rect x="42" y="6" width="6" height="6" fill="#cfcfd3"/><rect x="48" y="0" width="6" height="6" fill="#c4c4c8"/><rect x="48" y="6" width="6" height="6" fill="#8f96a0"/><rect x="54" y="0" width="6" height="6" fill="#9c948f"/><rect x="54" y="6" width="6" height="6" fill="#7f7a7c"/><rect x="60" y="6" width="6" height="6" fill="#b9c6e0"/><rect x="66" y="0" width="6" height="6" fill="#e2e2e5"/><rect x="66" y="6" width="6" height="6" fill="#d6d0cc"/><rect x="72" y="0" width="6" height="6" fill="#b9c6e0"/><rect x="72" y="6" width="6" height="6" fill="#f2e8d4"/><rect x="78" y="6" width="6" height="6" fill="#e6e2dc"/><rect x="102" y="0" width="6" height="6" fill="#a39a97"/><rect x="108" y="0" width="6" height="6" fill="#8e8e94"/><rect x="108" y="6" width="6" height="6" fill="#d6d0cc"/><rect x="114" y="0" width="6" height="6" fill="#aab2bb"/><rect x="114" y="6" width="6" height="6" fill="#c9ccd2"/><rect x="120" y="6" width="6" height="6" fill="#d6d0cc"/><rect x="126" y="0" width="6" height="6" fill="#9a9aa0"/><rect x="132" y="0" width="6" height="6" fill="#cfcfd3"/><rect x="132" y="6" width="6" height="6" fill="#f0dcc0"/></svg><div class="t" style="right:530.97px;top:487.10px;font-size:14px;color:#333;font-weight:normal;letter-spacing:1.325px;-webkit-text-stroke:0.2px #333">0,00</div><div class="t" style="right:382.27px;top:487.10px;font-size:14px;color:#333;font-weight:normal;letter-spacing:1.325px;-webkit-text-stroke:0.2px #333">0,00</div><div class="r" style="left:1555px;top:481.5px;width:113px;height:25px;background:#f0f0f0;border-radius:3px"></div><div class="t" style="left:1565.5px;top:487.02px;font-size:13.5px;color:#333;font-weight:normal;letter-spacing:-0.403px;-webkit-text-stroke:0.45px #333">Renegociado</div><svg style="left:1644px;top:490.5px" width="14" height="8" viewBox="0 0 14 8"><rect x="0" y="1.3" width="1.9" height="5.2" fill="#222"/><rect x="11.4" y="1.3" width="1.9" height="5.2" fill="#333"/><path d="M3 1.6C4.5 0.2 8 0 9.8 1.2C10.6 1.8 10.8 3.5 10.3 5C9.6 6.8 7.6 7.6 6 7.2C4.6 6.9 3 5.8 2.8 4.2Z" fill="#222"/><path d="M5 3.6L7.2 1.8" stroke="#ddd" stroke-width="0.8"/></svg><div class="r" style="left:1764px;top:481px;width:83px;height:26px;background:#eff2f8;border:1px solid #c9d1dc;border-radius:3px"></div><div class="t" style="left:1774.4px;top:486.60px;font-size:14px;color:#1d4c99;font-weight:bold;letter-spacing:-0.35px;">Ações</div><svg style="left:1824px;top:491px" width="13" height="9" viewBox="0 0 13 9"><path d="M1 1.5L6.5 7L12 1.5" stroke="#1d4c99" stroke-width="1.8" fill="none"/></svg><div class="r" style="left:336px;top:528px;width:1529px;height:68px;background:#ffffff;"></div><div class="r" style="left:336px;top:528px;width:5px;height:69px;background:#d8232a;"></div><div class="r" style="left:361px;top:552px;width:18px;height:17px;background:#fff;border:1.5px solid #2a84e0;border-radius:3px"></div><div class="t" style="left:407.1px;top:555.10px;font-size:14px;color:#333;font-weight:normal;letter-spacing:1.733px;-webkit-text-stroke:0.2px #333">01/11/2024</div><div class="t" style="left:528.2px;top:555.10px;font-size:14px;color:#333;font-weight:normal;letter-spacing:1.733px;-webkit-text-stroke:0.2px #333">01/11/2024</div><div class="r" style="left:670px;top:528px;width:432px;height:68px;background:#ffffff;"></div><svg style="left:671px;top:548px" width="270" height="12"><rect x="0" y="0" width="6" height="6" fill="#6e6870"/><rect x="6" y="0" width="6" height="6" fill="#dfe0e4"/><rect x="12" y="0" width="6" height="6" fill="#8c8c90"/><rect x="0" y="6" width="6" height="6" fill="#9a9a9e"/><rect x="6" y="6" width="6" height="6" fill="#a8a8ac"/><rect x="12" y="6" width="6" height="6" fill="#5f585e"/><rect x="30" y="0" width="6" height="6" fill="#e6e2dc"/><rect x="30" y="6" width="6" height="6" fill="#cfcfd3"/><rect x="36" y="0" width="6" height="6" fill="#9c948f"/><rect x="36" y="6" width="6" height="6" fill="#c9ccd2"/><rect x="42" y="0" width="6" height="6" fill="#8e8e94"/><rect x="42" y="6" width="6" height="6" fill="#eadcc8"/><rect x="48" y="0" width="6" height="6" fill="#d8d8dc"/><rect x="48" y="6" width="6" height="6" fill="#aab2bb"/><rect x="60" y="6" width="6" height="6" fill="#9a9aa0"/><rect x="66" y="6" width="6" height="6" fill="#7f7a7c"/><rect x="72" y="6" width="6" height="6" fill="#b0b0b5"/><rect x="90" y="0" width="6" height="6" fill="#d8d8dc"/><rect x="90" y="6" width="6" height="6" fill="#e6d4cc"/><rect x="96" y="6" width="6" height="6" fill="#aab2bb"/><rect x="102" y="0" width="6" height="6" fill="#aab2bb"/><rect x="102" y="6" width="6" height="6" fill="#a5a5aa"/><rect x="108" y="0" width="6" height="6" fill="#9a9aa0"/><rect x="108" y="6" width="6" height="6" fill="#a39a97"/><rect x="120" y="6" width="6" height="6" fill="#9c948f"/><rect x="126" y="0" width="6" height="6" fill="#8f96a0"/><rect x="132" y="0" width="6" height="6" fill="#8f96a0"/><rect x="132" y="6" width="6" height="6" fill="#e6d4cc"/><rect x="138" y="0" width="6" height="6" fill="#e6d4cc"/><rect x="138" y="6" width="6" height="6" fill="#9c948f"/><rect x="150" y="0" width="6" height="6" fill="#8f96a0"/><rect x="156" y="0" width="6" height="6" fill="#c9ccd2"/><rect x="156" y="6" width="6" height="6" fill="#c4c4c8"/><rect x="162" y="6" width="6" height="6" fill="#cfcfd3"/><rect x="168" y="0" width="6" height="6" fill="#8e8e94"/><rect x="174" y="0" width="6" height="6" fill="#8f96a0"/><rect x="174" y="6" width="6" height="6" fill="#9c948f"/><rect x="180" y="0" width="6" height="6" fill="#aab2bb"/><rect x="180" y="6" width="6" height="6" fill="#a5a5aa"/><rect x="186" y="0" width="6" height="6" fill="#7f7a7c"/><rect x="192" y="0" width="6" height="6" fill="#a39a97"/><rect x="204" y="0" width="6" height="6" fill="#9a9aa0"/><rect x="204" y="6" width="6" height="6" fill="#d8d8dc"/><rect x="210" y="0" width="6" height="6" fill="#b0b0b5"/><rect x="216" y="0" width="6" height="6" fill="#8f96a0"/><rect x="216" y="6" width="6" height="6" fill="#9c948f"/><rect x="222" y="0" width="6" height="6" fill="#9c948f"/><rect x="222" y="6" width="6" height="6" fill="#7f7a7c"/><rect x="228" y="0" width="6" height="6" fill="#e6e2dc"/><rect x="228" y="6" width="6" height="6" fill="#b0b0b5"/><rect x="234" y="0" width="6" height="6" fill="#e2e2e5"/><rect x="240" y="0" width="6" height="6" fill="#c8d4ea"/><rect x="240" y="6" width="6" height="6" fill="#aab2bb"/><rect x="246" y="6" width="6" height="6" fill="#7f7a7c"/><rect x="264" y="0" width="6" height="6" fill="#9a9aa0"/></svg><div class="r" style="left:671px;top:566px;width:85px;height:22px;background:#f5f6f7;border-radius:5px"></div><svg style="left:677px;top:572px" width="72" height="12"><rect x="0" y="0" width="6" height="6" fill="#c4c4c8"/><rect x="0" y="6" width="6" height="6" fill="#8e8e94"/><rect x="6" y="0" width="6" height="6" fill="#a5a5aa"/><rect x="6" y="6" width="6" height="6" fill="#e2e2e5"/><rect x="12" y="0" width="6" height="6" fill="#9a9aa0"/><rect x="12" y="6" width="6" height="6" fill="#d4e8f4"/><rect x="18" y="0" width="6" height="6" fill="#8e8e94"/><rect x="18" y="6" width="6" height="6" fill="#aab2bb"/><rect x="24" y="0" width="6" height="6" fill="#b0b0b5"/><rect x="24" y="6" width="6" height="6" fill="#b0b0b5"/><rect x="30" y="0" width="6" height="6" fill="#9c948f"/><rect x="30" y="6" width="6" height="6" fill="#8f96a0"/><rect x="36" y="0" width="6" height="6" fill="#8f96a0"/><rect x="42" y="0" width="6" height="6" fill="#a39a97"/><rect x="42" y="6" width="6" height="6" fill="#8f96a0"/><rect x="48" y="0" width="6" height="6" fill="#d6d0cc"/><rect x="54" y="0" width="6" height="6" fill="#b0b0b5"/><rect x="54" y="6" width="6" height="6" fill="#d4e8f4"/><rect x="66" y="0" width="6" height="6" fill="#eadcc8"/></svg><svg style="left:760px;top:572px" width="108" height="12"><rect x="0" y="6" width="6" height="6" fill="#c8d4ea"/><rect x="6" y="6" width="6" height="6" fill="#b0b0b5"/><rect x="12" y="0" width="6" height="6" fill="#e2e2e5"/><rect x="12" y="6" width="6" height="6" fill="#8f96a0"/><rect x="18" y="0" width="6" height="6" fill="#d8d8dc"/><rect x="18" y="6" width="6" height="6" fill="#f2e8d4"/><rect x="24" y="0" width="6" height="6" fill="#7f7a7c"/><rect x="24" y="6" width="6" height="6" fill="#8f96a0"/><rect x="36" y="0" width="6" height="6" fill="#9a9aa0"/><rect x="36" y="6" width="6" height="6" fill="#9a9aa0"/><rect x="42" y="0" width="6" height="6" fill="#e2e2e5"/><rect x="42" y="6" width="6" height="6" fill="#b9c6e0"/><rect x="48" y="0" width="6" height="6" fill="#cfcfd3"/><rect x="48" y="6" width="6" height="6" fill="#d4e8f4"/><rect x="54" y="0" width="6" height="6" fill="#e2e2e5"/><rect x="54" y="6" width="6" height="6" fill="#8f96a0"/><rect x="60" y="0" width="6" height="6" fill="#9a9aa0"/><rect x="66" y="0" width="6" height="6" fill="#9a9aa0"/><rect x="72" y="0" width="6" height="6" fill="#8e8e94"/><rect x="72" y="6" width="6" height="6" fill="#d8d8dc"/><rect x="78" y="6" width="6" height="6" fill="#c9ccd2"/><rect x="96" y="0" width="6" height="6" fill="#aab2bb"/><rect x="96" y="6" width="6" height="6" fill="#8f96a0"/><rect x="102" y="0" width="6" height="6" fill="#f0dcc0"/><rect x="102" y="6" width="6" height="6" fill="#8e8e94"/></svg><div class="t" style="right:530.97px;top:555.10px;font-size:14px;color:#333;font-weight:normal;letter-spacing:1.325px;-webkit-text-stroke:0.2px #333">20,00</div><div class="t" style="right:382.27px;top:555.10px;font-size:14px;color:#333;font-weight:normal;letter-spacing:1.325px;-webkit-text-stroke:0.2px #333">20,00</div><div class="r" style="left:1555px;top:549.5px;width:113px;height:25px;background:#fdf1c9;border-radius:3px"></div><div class="t" style="left:1579.0px;top:555.02px;font-size:13.5px;color:#6b4200;font-weight:normal;letter-spacing:0.125px;-webkit-text-stroke:0.45px #6b4200">Em Aberto</div><svg style="left:1728px;top:555px" width="20" height="18" viewBox="0 0 20 18" fill="none" stroke="#2a84e0" stroke-width="1.4" stroke-linejoin="round" stroke-linecap="round"><path d="M3.4 12.3C1.9 11.1 1.2 9.6 1.2 8C1.2 4.3 5 1.3 9.8 1.3C14.6 1.3 18.4 4.3 18.4 8C18.4 11.7 14.6 14.6 9.8 14.6C8.4 14.6 7.2 14.3 6 14.2L1.6 15.7Z"/><path d="M7 8L8.6 9.8L12.7 6.4"/></svg><div class="r" style="left:1764px;top:549px;width:83px;height:26px;background:#eff2f8;border:1px solid #c9d1dc;border-radius:3px"></div><div class="t" style="left:1774.4px;top:554.60px;font-size:14px;color:#1d4c99;font-weight:bold;letter-spacing:-0.35px;">Ações</div><svg style="left:1824px;top:559px" width="13" height="9" viewBox="0 0 13 9"><path d="M1 1.5L6.5 7L12 1.5" stroke="#1d4c99" stroke-width="1.8" fill="none"/></svg><div class="r" style="left:336px;top:596px;width:1529px;height:68px;background:#ffffff;"></div><div class="r" style="left:336px;top:596px;width:5px;height:69px;background:#d8232a;"></div><div class="r" style="left:361px;top:620px;width:18px;height:17px;background:#fff;border:1.5px solid #2a84e0;border-radius:3px"></div><div class="t" style="left:407.1px;top:623.10px;font-size:14px;color:#333;font-weight:normal;letter-spacing:1.733px;-webkit-text-stroke:0.2px #333">01/11/2024</div><div class="t" style="left:528.2px;top:623.10px;font-size:14px;color:#333;font-weight:normal;letter-spacing:1.733px;-webkit-text-stroke:0.2px #333">01/11/2024</div><div class="r" style="left:670px;top:596px;width:432px;height:68px;background:#ffffff;"></div><svg style="left:671px;top:616px" width="234" height="12"><rect x="0" y="0" width="6" height="6" fill="#6e6870"/><rect x="6" y="0" width="6" height="6" fill="#dfe0e4"/><rect x="12" y="0" width="6" height="6" fill="#8c8c90"/><rect x="0" y="6" width="6" height="6" fill="#9a9a9e"/><rect x="6" y="6" width="6" height="6" fill="#a8a8ac"/><rect x="12" y="6" width="6" height="6" fill="#5f585e"/><rect x="30" y="0" width="6" height="6" fill="#c9ccd2"/><rect x="30" y="6" width="6" height="6" fill="#f0dcc0"/><rect x="36" y="0" width="6" height="6" fill="#c4c4c8"/><rect x="36" y="6" width="6" height="6" fill="#a5a5aa"/><rect x="42" y="0" width="6" height="6" fill="#8e8e94"/><rect x="42" y="6" width="6" height="6" fill="#cfcfd3"/><rect x="54" y="6" width="6" height="6" fill="#9a9aa0"/><rect x="60" y="0" width="6" height="6" fill="#f0dcc0"/><rect x="60" y="6" width="6" height="6" fill="#aab2bb"/><rect x="66" y="0" width="6" height="6" fill="#d6d0cc"/><rect x="66" y="6" width="6" height="6" fill="#e6e2dc"/><rect x="78" y="0" width="6" height="6" fill="#d8d8dc"/><rect x="78" y="6" width="6" height="6" fill="#aab2bb"/><rect x="84" y="0" width="6" height="6" fill="#a5a5aa"/><rect x="84" y="6" width="6" height="6" fill="#d4e8f4"/><rect x="90" y="0" width="6" height="6" fill="#b0b0b5"/><rect x="90" y="6" width="6" height="6" fill="#9a9aa0"/><rect x="96" y="0" width="6" height="6" fill="#eadcc8"/><rect x="96" y="6" width="6" height="6" fill="#d4e8f4"/><rect x="102" y="0" width="6" height="6" fill="#c8d4ea"/><rect x="108" y="0" width="6" height="6" fill="#b0b0b5"/><rect x="114" y="0" width="6" height="6" fill="#f0dcc0"/><rect x="114" y="6" width="6" height="6" fill="#d6d0cc"/><rect x="126" y="0" width="6" height="6" fill="#d8d8dc"/><rect x="126" y="6" width="6" height="6" fill="#a5a5aa"/><rect x="132" y="0" width="6" height="6" fill="#c8d4ea"/><rect x="132" y="6" width="6" height="6" fill="#cfcfd3"/><rect x="138" y="0" width="6" height="6" fill="#b9c6e0"/><rect x="138" y="6" width="6" height="6" fill="#9c948f"/><rect x="144" y="0" width="6" height="6" fill="#aab2bb"/><rect x="144" y="6" width="6" height="6" fill="#9a9aa0"/><rect x="156" y="0" width="6" height="6" fill="#a5a5aa"/><rect x="156" y="6" width="6" height="6" fill="#9c948f"/><rect x="162" y="0" width="6" height="6" fill="#8e8e94"/><rect x="162" y="6" width="6" height="6" fill="#d8d8dc"/><rect x="168" y="0" width="6" height="6" fill="#a39a97"/><rect x="168" y="6" width="6" height="6" fill="#8f96a0"/><rect x="174" y="0" width="6" height="6" fill="#a5a5aa"/><rect x="174" y="6" width="6" height="6" fill="#b9c6e0"/><rect x="180" y="0" width="6" height="6" fill="#a5a5aa"/><rect x="180" y="6" width="6" height="6" fill="#a5a5aa"/><rect x="198" y="0" width="6" height="6" fill="#d8d8dc"/><rect x="198" y="6" width="6" height="6" fill="#a39a97"/><rect x="204" y="0" width="6" height="6" fill="#c4c4c8"/><rect x="204" y="6" width="6" height="6" fill="#b0b0b5"/><rect x="210" y="0" width="6" height="6" fill="#c8d4ea"/><rect x="216" y="0" width="6" height="6" fill="#8f96a0"/><rect x="216" y="6" width="6" height="6" fill="#d6d0cc"/><rect x="222" y="0" width="6" height="6" fill="#b0b0b5"/><rect x="222" y="6" width="6" height="6" fill="#cfcfd3"/><rect x="228" y="0" width="6" height="6" fill="#b0b0b5"/><rect x="228" y="6" width="6" height="6" fill="#f2e8d4"/></svg><div class="r" style="left:671px;top:634px;width:126px;height:22px;background:#f5f6f7;border-radius:5px"></div><svg style="left:677px;top:640px" width="114" height="12"><rect x="0" y="0" width="6" height="6" fill="#b0b0b5"/><rect x="0" y="6" width="6" height="6" fill="#e6e2dc"/><rect x="6" y="0" width="6" height="6" fill="#d8d8dc"/><rect x="6" y="6" width="6" height="6" fill="#c9ccd2"/><rect x="12" y="6" width="6" height="6" fill="#d8d8dc"/><rect x="18" y="0" width="6" height="6" fill="#a39a97"/><rect x="18" y="6" width="6" height="6" fill="#8e8e94"/><rect x="24" y="0" width="6" height="6" fill="#f0dcc0"/><rect x="24" y="6" width="6" height="6" fill="#e6e2dc"/><rect x="36" y="6" width="6" height="6" fill="#a39a97"/><rect x="42" y="0" width="6" height="6" fill="#aab2bb"/><rect x="42" y="6" width="6" height="6" fill="#c4c4c8"/><rect x="60" y="0" width="6" height="6" fill="#e6e2dc"/><rect x="60" y="6" width="6" height="6" fill="#7f7a7c"/><rect x="66" y="6" width="6" height="6" fill="#c4c4c8"/><rect x="78" y="0" width="6" height="6" fill="#d4e8f4"/><rect x="78" y="6" width="6" height="6" fill="#e6d4cc"/><rect x="96" y="0" width="6" height="6" fill="#9c948f"/><rect x="96" y="6" width="6" height="6" fill="#e6d4cc"/><rect x="102" y="6" width="6" height="6" fill="#aab2bb"/><rect x="108" y="0" width="6" height="6" fill="#7f7a7c"/><rect x="108" y="6" width="6" height="6" fill="#b0b0b5"/></svg><div class="t" style="right:530.97px;top:623.10px;font-size:14px;color:#333;font-weight:normal;letter-spacing:1.325px;-webkit-text-stroke:0.2px #333">5,80</div><div class="t" style="right:382.27px;top:623.10px;font-size:14px;color:#333;font-weight:normal;letter-spacing:1.325px;-webkit-text-stroke:0.2px #333">5,80</div><div class="r" style="left:1555px;top:617.5px;width:113px;height:25px;background:#fdf1c9;border-radius:3px"></div><div class="t" style="left:1579.0px;top:623.02px;font-size:13.5px;color:#6b4200;font-weight:normal;letter-spacing:0.125px;-webkit-text-stroke:0.45px #6b4200">Em Aberto</div><svg style="left:1728px;top:623px" width="20" height="18" viewBox="0 0 20 18" fill="none" stroke="#2a84e0" stroke-width="1.4" stroke-linejoin="round" stroke-linecap="round"><path d="M3.4 12.3C1.9 11.1 1.2 9.6 1.2 8C1.2 4.3 5 1.3 9.8 1.3C14.6 1.3 18.4 4.3 18.4 8C18.4 11.7 14.6 14.6 9.8 14.6C8.4 14.6 7.2 14.3 6 14.2L1.6 15.7Z"/><path d="M7 8L8.6 9.8L12.7 6.4"/></svg><div class="r" style="left:1764px;top:617px;width:83px;height:26px;background:#eff2f8;border:1px solid #c9d1dc;border-radius:3px"></div><div class="t" style="left:1774.4px;top:622.60px;font-size:14px;color:#1d4c99;font-weight:bold;letter-spacing:-0.35px;">Ações</div><svg style="left:1824px;top:627px" width="13" height="9" viewBox="0 0 13 9"><path d="M1 1.5L6.5 7L12 1.5" stroke="#1d4c99" stroke-width="1.8" fill="none"/></svg><div class="r" style="left:336px;top:664px;width:1529px;height:68px;background:#ffffff;"></div><div class="r" style="left:336px;top:664px;width:5px;height:69px;background:#d8232a;"></div><div class="r" style="left:361px;top:688px;width:18px;height:17px;background:#fff;border:1.5px solid #2a84e0;border-radius:3px"></div><div class="t" style="left:407.1px;top:691.10px;font-size:14px;color:#333;font-weight:normal;letter-spacing:1.733px;-webkit-text-stroke:0.2px #333">01/11/2024</div><div class="t" style="left:528.2px;top:691.10px;font-size:14px;color:#333;font-weight:normal;letter-spacing:1.733px;-webkit-text-stroke:0.2px #333">01/11/2024</div><div class="r" style="left:670px;top:664px;width:432px;height:68px;background:#ffffff;"></div><svg style="left:671px;top:684px" width="126" height="12"><rect x="0" y="0" width="6" height="6" fill="#6e6870"/><rect x="6" y="0" width="6" height="6" fill="#dfe0e4"/><rect x="12" y="0" width="6" height="6" fill="#8c8c90"/><rect x="0" y="6" width="6" height="6" fill="#9a9a9e"/><rect x="6" y="6" width="6" height="6" fill="#a8a8ac"/><rect x="12" y="6" width="6" height="6" fill="#5f585e"/><rect x="30" y="0" width="6" height="6" fill="#d0d0e8"/><rect x="36" y="0" width="6" height="6" fill="#c4c4c8"/><rect x="36" y="6" width="6" height="6" fill="#a39a97"/><rect x="42" y="6" width="6" height="6" fill="#d6d0cc"/><rect x="48" y="6" width="6" height="6" fill="#b9c6e0"/><rect x="54" y="0" width="6" height="6" fill="#8f96a0"/><rect x="60" y="0" width="6" height="6" fill="#9a9aa0"/><rect x="60" y="6" width="6" height="6" fill="#8e8e94"/><rect x="66" y="0" width="6" height="6" fill="#d8d8dc"/><rect x="66" y="6" width="6" height="6" fill="#d0d0e8"/><rect x="72" y="0" width="6" height="6" fill="#cfcfd3"/><rect x="72" y="6" width="6" height="6" fill="#e2e2e5"/><rect x="78" y="0" width="6" height="6" fill="#8e8e94"/><rect x="78" y="6" width="6" height="6" fill="#8e8e94"/><rect x="90" y="0" width="6" height="6" fill="#9a9aa0"/><rect x="90" y="6" width="6" height="6" fill="#e2e2e5"/><rect x="96" y="0" width="6" height="6" fill="#cfcfd3"/><rect x="96" y="6" width="6" height="6" fill="#f2e8d4"/><rect x="102" y="0" width="6" height="6" fill="#d4e8f4"/><rect x="102" y="6" width="6" height="6" fill="#9a9aa0"/><rect x="120" y="6" width="6" height="6" fill="#9c948f"/></svg><div class="r" style="left:671px;top:702px;width:247px;height:22px;background:#f5f6f7;border-radius:5px"></div><svg style="left:677px;top:708px" width="234" height="12"><rect x="0" y="0" width="6" height="6" fill="#d8d8dc"/><rect x="0" y="6" width="6" height="6" fill="#c9ccd2"/><rect x="6" y="6" width="6" height="6" fill="#8e8e94"/><rect x="12" y="0" width="6" height="6" fill="#e2e2e5"/><rect x="12" y="6" width="6" height="6" fill="#9a9aa0"/><rect x="24" y="0" width="6" height="6" fill="#7f7a7c"/><rect x="24" y="6" width="6" height="6" fill="#a5a5aa"/><rect x="30" y="0" width="6" height="6" fill="#8e8e94"/><rect x="36" y="0" width="6" height="6" fill="#7f7a7c"/><rect x="36" y="6" width="6" height="6" fill="#f0dcc0"/><rect x="42" y="0" width="6" height="6" fill="#cfcfd3"/><rect x="42" y="6" width="6" height="6" fill="#b0b0b5"/><rect x="48" y="0" width="6" height="6" fill="#9c948f"/><rect x="48" y="6" width="6" height="6" fill="#7f7a7c"/><rect x="54" y="0" width="6" height="6" fill="#c9ccd2"/><rect x="66" y="0" width="6" height="6" fill="#cfcfd3"/><rect x="66" y="6" width="6" height="6" fill="#b0b0b5"/><rect x="72" y="6" width="6" height="6" fill="#8f96a0"/><rect x="78" y="0" width="6" height="6" fill="#7f7a7c"/><rect x="78" y="6" width="6" height="6" fill="#c8d4ea"/><rect x="84" y="6" width="6" height="6" fill="#c9ccd2"/><rect x="90" y="6" width="6" height="6" fill="#9a9aa0"/><rect x="96" y="0" width="6" height="6" fill="#8e8e94"/><rect x="96" y="6" width="6" height="6" fill="#a5a5aa"/><rect x="108" y="0" width="6" height="6" fill="#a5a5aa"/><rect x="108" y="6" width="6" height="6" fill="#d6d0cc"/><rect x="114" y="0" width="6" height="6" fill="#a39a97"/><rect x="114" y="6" width="6" height="6" fill="#eadcc8"/><rect x="120" y="6" width="6" height="6" fill="#e2e2e5"/><rect x="126" y="0" width="6" height="6" fill="#9a9aa0"/><rect x="126" y="6" width="6" height="6" fill="#eadcc8"/><rect x="132" y="6" width="6" height="6" fill="#9a9aa0"/><rect x="144" y="0" width="6" height="6" fill="#d8d8dc"/><rect x="144" y="6" width="6" height="6" fill="#8e8e94"/><rect x="150" y="0" width="6" height="6" fill="#c8d4ea"/><rect x="150" y="6" width="6" height="6" fill="#a39a97"/><rect x="156" y="0" width="6" height="6" fill="#e2e2e5"/><rect x="162" y="0" width="6" height="6" fill="#8f96a0"/><rect x="162" y="6" width="6" height="6" fill="#c4c4c8"/><rect x="174" y="0" width="6" height="6" fill="#cfcfd3"/><rect x="174" y="6" width="6" height="6" fill="#e6d4cc"/><rect x="180" y="0" width="6" height="6" fill="#b0b0b5"/><rect x="180" y="6" width="6" height="6" fill="#c4c4c8"/><rect x="186" y="0" width="6" height="6" fill="#aab2bb"/><rect x="186" y="6" width="6" height="6" fill="#f0dcc0"/><rect x="192" y="0" width="6" height="6" fill="#e6d4cc"/><rect x="192" y="6" width="6" height="6" fill="#b0b0b5"/><rect x="198" y="6" width="6" height="6" fill="#9a9aa0"/><rect x="204" y="0" width="6" height="6" fill="#eadcc8"/><rect x="204" y="6" width="6" height="6" fill="#8f96a0"/><rect x="216" y="0" width="6" height="6" fill="#8e8e94"/><rect x="216" y="6" width="6" height="6" fill="#8f96a0"/><rect x="222" y="6" width="6" height="6" fill="#b0b0b5"/><rect x="228" y="6" width="6" height="6" fill="#d6d0cc"/></svg><div class="t" style="right:530.97px;top:691.10px;font-size:14px;color:#333;font-weight:normal;letter-spacing:1.325px;-webkit-text-stroke:0.2px #333">200,00</div><div class="t" style="right:382.27px;top:691.10px;font-size:14px;color:#333;font-weight:normal;letter-spacing:1.325px;-webkit-text-stroke:0.2px #333">200,00</div><div class="r" style="left:1555px;top:685.5px;width:113px;height:25px;background:#fdf1c9;border-radius:3px"></div><div class="t" style="left:1579.0px;top:691.02px;font-size:13.5px;color:#6b4200;font-weight:normal;letter-spacing:0.125px;-webkit-text-stroke:0.45px #6b4200">Em Aberto</div><svg style="left:1728px;top:691px" width="20" height="18" viewBox="0 0 20 18" fill="none" stroke="#2a84e0" stroke-width="1.4" stroke-linejoin="round" stroke-linecap="round"><path d="M3.4 12.3C1.9 11.1 1.2 9.6 1.2 8C1.2 4.3 5 1.3 9.8 1.3C14.6 1.3 18.4 4.3 18.4 8C18.4 11.7 14.6 14.6 9.8 14.6C8.4 14.6 7.2 14.3 6 14.2L1.6 15.7Z"/><path d="M7 8L8.6 9.8L12.7 6.4"/></svg><div class="r" style="left:1764px;top:685px;width:83px;height:26px;background:#eff2f8;border:1px solid #c9d1dc;border-radius:3px"></div><div class="t" style="left:1774.4px;top:690.60px;font-size:14px;color:#1d4c99;font-weight:bold;letter-spacing:-0.35px;">Ações</div><svg style="left:1824px;top:695px" width="13" height="9" viewBox="0 0 13 9"><path d="M1 1.5L6.5 7L12 1.5" stroke="#1d4c99" stroke-width="1.8" fill="none"/></svg><div class="r" style="left:336px;top:732px;width:1529px;height:68px;background:#ffffff;"></div><div class="r" style="left:336px;top:732px;width:5px;height:69px;background:#d8232a;"></div><div class="r" style="left:361px;top:756px;width:18px;height:17px;background:#fff;border:1.5px solid #2a84e0;border-radius:3px"></div><div class="t" style="left:407.1px;top:759.10px;font-size:14px;color:#333;font-weight:normal;letter-spacing:1.733px;-webkit-text-stroke:0.2px #333">01/11/2024</div><div class="t" style="left:528.2px;top:759.10px;font-size:14px;color:#333;font-weight:normal;letter-spacing:1.733px;-webkit-text-stroke:0.2px #333">01/11/2024</div><div class="r" style="left:670px;top:732px;width:432px;height:68px;background:#ffffff;"></div><svg style="left:671px;top:752px" width="144" height="12"><rect x="0" y="0" width="6" height="6" fill="#6e6870"/><rect x="6" y="0" width="6" height="6" fill="#dfe0e4"/><rect x="12" y="0" width="6" height="6" fill="#8c8c90"/><rect x="0" y="6" width="6" height="6" fill="#9a9a9e"/><rect x="6" y="6" width="6" height="6" fill="#a8a8ac"/><rect x="12" y="6" width="6" height="6" fill="#5f585e"/><rect x="30" y="0" width="6" height="6" fill="#a5a5aa"/><rect x="36" y="0" width="6" height="6" fill="#d8d8dc"/><rect x="36" y="6" width="6" height="6" fill="#9c948f"/><rect x="42" y="0" width="6" height="6" fill="#aab2bb"/><rect x="42" y="6" width="6" height="6" fill="#c9ccd2"/><rect x="54" y="0" width="6" height="6" fill="#e6e2dc"/><rect x="54" y="6" width="6" height="6" fill="#cfcfd3"/><rect x="60" y="0" width="6" height="6" fill="#d8d8dc"/><rect x="60" y="6" width="6" height="6" fill="#b0b0b5"/><rect x="66" y="0" width="6" height="6" fill="#eadcc8"/><rect x="66" y="6" width="6" height="6" fill="#cfcfd3"/><rect x="72" y="0" width="6" height="6" fill="#e6d4cc"/><rect x="72" y="6" width="6" height="6" fill="#b0b0b5"/><rect x="78" y="0" width="6" height="6" fill="#e6d4cc"/><rect x="78" y="6" width="6" height="6" fill="#8e8e94"/><rect x="84" y="0" width="6" height="6" fill="#b9c6e0"/><rect x="84" y="6" width="6" height="6" fill="#d6d0cc"/><rect x="90" y="0" width="6" height="6" fill="#9c948f"/><rect x="90" y="6" width="6" height="6" fill="#b0b0b5"/><rect x="102" y="0" width="6" height="6" fill="#d6d0cc"/><rect x="108" y="0" width="6" height="6" fill="#e6e2dc"/><rect x="108" y="6" width="6" height="6" fill="#9a9aa0"/><rect x="114" y="0" width="6" height="6" fill="#9a9aa0"/><rect x="120" y="0" width="6" height="6" fill="#a5a5aa"/><rect x="120" y="6" width="6" height="6" fill="#aab2bb"/><rect x="126" y="0" width="6" height="6" fill="#f2e8d4"/><rect x="132" y="0" width="6" height="6" fill="#aab2bb"/><rect x="138" y="0" width="6" height="6" fill="#b0b0b5"/><rect x="138" y="6" width="6" height="6" fill="#cfcfd3"/></svg><div class="r" style="left:671px;top:770px;width:220px;height:22px;background:#f5f6f7;border-radius:5px"></div><svg style="left:677px;top:776px" width="210" height="12"><rect x="0" y="0" width="6" height="6" fill="#c9ccd2"/><rect x="0" y="6" width="6" height="6" fill="#8e8e94"/><rect x="6" y="0" width="6" height="6" fill="#d0d0e8"/><rect x="6" y="6" width="6" height="6" fill="#d4e8f4"/><rect x="12" y="6" width="6" height="6" fill="#c4c4c8"/><rect x="18" y="0" width="6" height="6" fill="#d6d0cc"/><rect x="18" y="6" width="6" height="6" fill="#8f96a0"/><rect x="24" y="0" width="6" height="6" fill="#8f96a0"/><rect x="24" y="6" width="6" height="6" fill="#c9ccd2"/><rect x="30" y="0" width="6" height="6" fill="#8f96a0"/><rect x="36" y="0" width="6" height="6" fill="#8f96a0"/><rect x="36" y="6" width="6" height="6" fill="#9a9aa0"/><rect x="42" y="6" width="6" height="6" fill="#7f7a7c"/><rect x="60" y="6" width="6" height="6" fill="#e6e2dc"/><rect x="72" y="0" width="6" height="6" fill="#7f7a7c"/><rect x="72" y="6" width="6" height="6" fill="#e2e2e5"/><rect x="78" y="0" width="6" height="6" fill="#e6d4cc"/><rect x="78" y="6" width="6" height="6" fill="#e2e2e5"/><rect x="84" y="0" width="6" height="6" fill="#9c948f"/><rect x="84" y="6" width="6" height="6" fill="#d8d8dc"/><rect x="90" y="0" width="6" height="6" fill="#9a9aa0"/><rect x="90" y="6" width="6" height="6" fill="#9c948f"/><rect x="102" y="0" width="6" height="6" fill="#d8d8dc"/><rect x="102" y="6" width="6" height="6" fill="#a39a97"/><rect x="108" y="0" width="6" height="6" fill="#8e8e94"/><rect x="108" y="6" width="6" height="6" fill="#9c948f"/><rect x="114" y="0" width="6" height="6" fill="#a5a5aa"/><rect x="126" y="0" width="6" height="6" fill="#8f96a0"/><rect x="126" y="6" width="6" height="6" fill="#9a9aa0"/><rect x="132" y="0" width="6" height="6" fill="#e6d4cc"/><rect x="132" y="6" width="6" height="6" fill="#c9ccd2"/><rect x="138" y="0" width="6" height="6" fill="#eadcc8"/><rect x="138" y="6" width="6" height="6" fill="#b0b0b5"/><rect x="144" y="6" width="6" height="6" fill="#e2e2e5"/><rect x="150" y="0" width="6" height="6" fill="#aab2bb"/><rect x="150" y="6" width="6" height="6" fill="#8e8e94"/><rect x="156" y="0" width="6" height="6" fill="#aab2bb"/><rect x="156" y="6" width="6" height="6" fill="#d0d0e8"/><rect x="162" y="0" width="6" height="6" fill="#eadcc8"/><rect x="162" y="6" width="6" height="6" fill="#8e8e94"/><rect x="168" y="0" width="6" height="6" fill="#a39a97"/><rect x="174" y="0" width="6" height="6" fill="#a5a5aa"/><rect x="174" y="6" width="6" height="6" fill="#d6d0cc"/><rect x="180" y="0" width="6" height="6" fill="#a39a97"/><rect x="180" y="6" width="6" height="6" fill="#c9ccd2"/><rect x="192" y="0" width="6" height="6" fill="#7f7a7c"/><rect x="192" y="6" width="6" height="6" fill="#a39a97"/><rect x="198" y="6" width="6" height="6" fill="#d8d8dc"/><rect x="204" y="6" width="6" height="6" fill="#aab2bb"/></svg><svg style="left:760px;top:776px" width="318" height="12"><rect x="0" y="0" width="6" height="6" fill="#cfcfd3"/><rect x="0" y="6" width="6" height="6" fill="#e6e2dc"/><rect x="6" y="6" width="6" height="6" fill="#e2e2e5"/><rect x="12" y="0" width="6" height="6" fill="#9c948f"/><rect x="12" y="6" width="6" height="6" fill="#aab2bb"/><rect x="18" y="0" width="6" height="6" fill="#e6e2dc"/><rect x="18" y="6" width="6" height="6" fill="#e2e2e5"/><rect x="24" y="0" width="6" height="6" fill="#d6d0cc"/><rect x="24" y="6" width="6" height="6" fill="#eadcc8"/><rect x="30" y="0" width="6" height="6" fill="#e2e2e5"/><rect x="30" y="6" width="6" height="6" fill="#a5a5aa"/><rect x="36" y="6" width="6" height="6" fill="#8e8e94"/><rect x="42" y="0" width="6" height="6" fill="#e6d4cc"/><rect x="42" y="6" width="6" height="6" fill="#9c948f"/><rect x="54" y="0" width="6" height="6" fill="#8e8e94"/><rect x="54" y="6" width="6" height="6" fill="#e6e2dc"/><rect x="60" y="0" width="6" height="6" fill="#b9c6e0"/><rect x="60" y="6" width="6" height="6" fill="#8f96a0"/><rect x="66" y="0" width="6" height="6" fill="#f2e8d4"/><rect x="66" y="6" width="6" height="6" fill="#9a9aa0"/><rect x="72" y="0" width="6" height="6" fill="#a5a5aa"/><rect x="72" y="6" width="6" height="6" fill="#8e8e94"/><rect x="78" y="0" width="6" height="6" fill="#9a9aa0"/><rect x="78" y="6" width="6" height="6" fill="#aab2bb"/><rect x="84" y="0" width="6" height="6" fill="#cfcfd3"/><rect x="84" y="6" width="6" height="6" fill="#c4c4c8"/><rect x="90" y="0" width="6" height="6" fill="#d6d0cc"/><rect x="96" y="0" width="6" height="6" fill="#7f7a7c"/><rect x="96" y="6" width="6" height="6" fill="#9c948f"/><rect x="102" y="6" width="6" height="6" fill="#8e8e94"/><rect x="114" y="0" width="6" height="6" fill="#a5a5aa"/><rect x="120" y="6" width="6" height="6" fill="#aab2bb"/><rect x="126" y="0" width="6" height="6" fill="#9a9aa0"/><rect x="126" y="6" width="6" height="6" fill="#d6d0cc"/><rect x="132" y="6" width="6" height="6" fill="#e2e2e5"/><rect x="144" y="0" width="6" height="6" fill="#a39a97"/><rect x="150" y="0" width="6" height="6" fill="#a5a5aa"/><rect x="150" y="6" width="6" height="6" fill="#8f96a0"/><rect x="156" y="6" width="6" height="6" fill="#8f96a0"/><rect x="162" y="0" width="6" height="6" fill="#f0dcc0"/><rect x="162" y="6" width="6" height="6" fill="#9c948f"/><rect x="168" y="0" width="6" height="6" fill="#8e8e94"/><rect x="168" y="6" width="6" height="6" fill="#a5a5aa"/><rect x="174" y="0" width="6" height="6" fill="#f0dcc0"/><rect x="174" y="6" width="6" height="6" fill="#7f7a7c"/><rect x="180" y="0" width="6" height="6" fill="#b0b0b5"/><rect x="180" y="6" width="6" height="6" fill="#8f96a0"/><rect x="186" y="0" width="6" height="6" fill="#9c948f"/><rect x="186" y="6" width="6" height="6" fill="#8f96a0"/><rect x="198" y="0" width="6" height="6" fill="#9a9aa0"/><rect x="198" y="6" width="6" height="6" fill="#d8d8dc"/><rect x="204" y="6" width="6" height="6" fill="#b0b0b5"/><rect x="210" y="0" width="6" height="6" fill="#a5a5aa"/><rect x="216" y="0" width="6" height="6" fill="#d8d8dc"/><rect x="216" y="6" width="6" height="6" fill="#cfcfd3"/><rect x="228" y="6" width="6" height="6" fill="#d0d0e8"/><rect x="234" y="0" width="6" height="6" fill="#cfcfd3"/><rect x="234" y="6" width="6" height="6" fill="#9c948f"/><rect x="240" y="0" width="6" height="6" fill="#8e8e94"/><rect x="240" y="6" width="6" height="6" fill="#f0dcc0"/><rect x="258" y="0" width="6" height="6" fill="#e2e2e5"/><rect x="258" y="6" width="6" height="6" fill="#a5a5aa"/><rect x="264" y="0" width="6" height="6" fill="#b0b0b5"/><rect x="270" y="0" width="6" height="6" fill="#8e8e94"/><rect x="270" y="6" width="6" height="6" fill="#f0dcc0"/><rect x="276" y="0" width="6" height="6" fill="#eadcc8"/><rect x="282" y="0" width="6" height="6" fill="#eadcc8"/><rect x="282" y="6" width="6" height="6" fill="#d6d0cc"/><rect x="288" y="0" width="6" height="6" fill="#b9c6e0"/><rect x="288" y="6" width="6" height="6" fill="#d0d0e8"/><rect x="300" y="0" width="6" height="6" fill="#d0d0e8"/><rect x="300" y="6" width="6" height="6" fill="#c4c4c8"/><rect x="306" y="6" width="6" height="6" fill="#d6d0cc"/><rect x="312" y="0" width="6" height="6" fill="#e2e2e5"/><rect x="312" y="6" width="6" height="6" fill="#8e8e94"/></svg><div class="t" style="right:530.97px;top:759.10px;font-size:14px;color:#333;font-weight:normal;letter-spacing:1.325px;-webkit-text-stroke:0.2px #333">150,00</div><div class="t" style="right:382.27px;top:759.10px;font-size:14px;color:#333;font-weight:normal;letter-spacing:1.325px;-webkit-text-stroke:0.2px #333">150,00</div><div class="r" style="left:1555px;top:753.5px;width:113px;height:25px;background:#fdf1c9;border-radius:3px"></div><div class="t" style="left:1579.0px;top:759.02px;font-size:13.5px;color:#6b4200;font-weight:normal;letter-spacing:0.125px;-webkit-text-stroke:0.45px #6b4200">Em Aberto</div><svg style="left:1728px;top:759px" width="20" height="18" viewBox="0 0 20 18" fill="none" stroke="#2a84e0" stroke-width="1.4" stroke-linejoin="round" stroke-linecap="round"><path d="M3.4 12.3C1.9 11.1 1.2 9.6 1.2 8C1.2 4.3 5 1.3 9.8 1.3C14.6 1.3 18.4 4.3 18.4 8C18.4 11.7 14.6 14.6 9.8 14.6C8.4 14.6 7.2 14.3 6 14.2L1.6 15.7Z"/><path d="M7 8L8.6 9.8L12.7 6.4"/></svg><div class="r" style="left:1764px;top:753px;width:83px;height:26px;background:#eff2f8;border:1px solid #c9d1dc;border-radius:3px"></div><div class="t" style="left:1774.4px;top:758.60px;font-size:14px;color:#1d4c99;font-weight:bold;letter-spacing:-0.35px;">Ações</div><svg style="left:1824px;top:763px" width="13" height="9" viewBox="0 0 13 9"><path d="M1 1.5L6.5 7L12 1.5" stroke="#1d4c99" stroke-width="1.8" fill="none"/></svg><div class="r" style="left:336px;top:800px;width:1529px;height:68px;background:#ffffff;"></div><div class="r" style="left:336px;top:800px;width:5px;height:69px;background:#d8232a;"></div><div class="r" style="left:361px;top:824px;width:18px;height:17px;background:#fff;border:1.5px solid #2a84e0;border-radius:3px"></div><div class="t" style="left:407.1px;top:827.10px;font-size:14px;color:#333;font-weight:normal;letter-spacing:1.733px;-webkit-text-stroke:0.2px #333">01/11/2024</div><div class="t" style="left:528.2px;top:827.10px;font-size:14px;color:#333;font-weight:normal;letter-spacing:1.733px;-webkit-text-stroke:0.2px #333">01/11/2024</div><div class="r" style="left:670px;top:800px;width:432px;height:68px;background:#ffffff;"></div><svg style="left:671px;top:820px" width="138" height="12"><rect x="0" y="0" width="6" height="6" fill="#6e6870"/><rect x="6" y="0" width="6" height="6" fill="#dfe0e4"/><rect x="12" y="0" width="6" height="6" fill="#8c8c90"/><rect x="0" y="6" width="6" height="6" fill="#9a9a9e"/><rect x="6" y="6" width="6" height="6" fill="#a8a8ac"/><rect x="12" y="6" width="6" height="6" fill="#5f585e"/><rect x="30" y="0" width="6" height="6" fill="#9a9aa0"/><rect x="30" y="6" width="6" height="6" fill="#8f96a0"/><rect x="36" y="0" width="6" height="6" fill="#a5a5aa"/><rect x="36" y="6" width="6" height="6" fill="#c8d4ea"/><rect x="42" y="0" width="6" height="6" fill="#c8d4ea"/><rect x="42" y="6" width="6" height="6" fill="#eadcc8"/><rect x="54" y="6" width="6" height="6" fill="#9a9aa0"/><rect x="60" y="6" width="6" height="6" fill="#9a9aa0"/><rect x="66" y="0" width="6" height="6" fill="#b0b0b5"/><rect x="66" y="6" width="6" height="6" fill="#cfcfd3"/><rect x="78" y="0" width="6" height="6" fill="#aab2bb"/><rect x="78" y="6" width="6" height="6" fill="#a5a5aa"/><rect x="84" y="0" width="6" height="6" fill="#a5a5aa"/><rect x="84" y="6" width="6" height="6" fill="#d8d8dc"/><rect x="90" y="0" width="6" height="6" fill="#aab2bb"/><rect x="90" y="6" width="6" height="6" fill="#aab2bb"/><rect x="96" y="0" width="6" height="6" fill="#c8d4ea"/><rect x="96" y="6" width="6" height="6" fill="#cfcfd3"/><rect x="102" y="0" width="6" height="6" fill="#eadcc8"/><rect x="102" y="6" width="6" height="6" fill="#a39a97"/><rect x="108" y="0" width="6" height="6" fill="#b0b0b5"/><rect x="120" y="0" width="6" height="6" fill="#c8d4ea"/><rect x="120" y="6" width="6" height="6" fill="#f2e8d4"/><rect x="126" y="6" width="6" height="6" fill="#d0d0e8"/><rect x="132" y="0" width="6" height="6" fill="#7f7a7c"/><rect x="132" y="6" width="6" height="6" fill="#8e8e94"/></svg><div class="r" style="left:671px;top:838px;width:88px;height:22px;background:#f5f6f7;border-radius:5px"></div><svg style="left:677px;top:844px" width="78" height="12"><rect x="0" y="0" width="6" height="6" fill="#a5a5aa"/><rect x="0" y="6" width="6" height="6" fill="#a5a5aa"/><rect x="6" y="0" width="6" height="6" fill="#9a9aa0"/><rect x="12" y="0" width="6" height="6" fill="#cfcfd3"/><rect x="12" y="6" width="6" height="6" fill="#d6d0cc"/><rect x="18" y="0" width="6" height="6" fill="#9c948f"/><rect x="18" y="6" width="6" height="6" fill="#7f7a7c"/><rect x="24" y="0" width="6" height="6" fill="#c4c4c8"/><rect x="24" y="6" width="6" height="6" fill="#9c948f"/><rect x="42" y="0" width="6" height="6" fill="#f0dcc0"/><rect x="42" y="6" width="6" height="6" fill="#cfcfd3"/><rect x="48" y="0" width="6" height="6" fill="#d0d0e8"/><rect x="48" y="6" width="6" height="6" fill="#c9ccd2"/><rect x="54" y="0" width="6" height="6" fill="#7f7a7c"/><rect x="60" y="6" width="6" height="6" fill="#b0b0b5"/><rect x="72" y="0" width="6" height="6" fill="#e6d4cc"/></svg><svg style="left:765px;top:844px" width="258" height="12"><rect x="0" y="0" width="6" height="6" fill="#7f7a7c"/><rect x="0" y="6" width="6" height="6" fill="#9a9aa0"/><rect x="6" y="0" width="6" height="6" fill="#9a9aa0"/><rect x="6" y="6" width="6" height="6" fill="#c4c4c8"/><rect x="12" y="0" width="6" height="6" fill="#d4e8f4"/><rect x="12" y="6" width="6" height="6" fill="#f0dcc0"/><rect x="18" y="0" width="6" height="6" fill="#c4c4c8"/><rect x="18" y="6" width="6" height="6" fill="#a5a5aa"/><rect x="24" y="0" width="6" height="6" fill="#aab2bb"/><rect x="24" y="6" width="6" height="6" fill="#c4c4c8"/><rect x="30" y="0" width="6" height="6" fill="#a5a5aa"/><rect x="30" y="6" width="6" height="6" fill="#b0b0b5"/><rect x="36" y="0" width="6" height="6" fill="#d6d0cc"/><rect x="36" y="6" width="6" height="6" fill="#c8d4ea"/><rect x="42" y="6" width="6" height="6" fill="#7f7a7c"/><rect x="48" y="0" width="6" height="6" fill="#c8d4ea"/><rect x="48" y="6" width="6" height="6" fill="#b0b0b5"/><rect x="54" y="6" width="6" height="6" fill="#d0d0e8"/><rect x="66" y="0" width="6" height="6" fill="#a39a97"/><rect x="66" y="6" width="6" height="6" fill="#8e8e94"/><rect x="72" y="0" width="6" height="6" fill="#c4c4c8"/><rect x="72" y="6" width="6" height="6" fill="#8e8e94"/><rect x="78" y="0" width="6" height="6" fill="#8f96a0"/><rect x="78" y="6" width="6" height="6" fill="#c8d4ea"/><rect x="90" y="6" width="6" height="6" fill="#e6d4cc"/><rect x="96" y="0" width="6" height="6" fill="#c8d4ea"/><rect x="96" y="6" width="6" height="6" fill="#7f7a7c"/><rect x="102" y="0" width="6" height="6" fill="#8e8e94"/><rect x="102" y="6" width="6" height="6" fill="#a5a5aa"/><rect x="114" y="0" width="6" height="6" fill="#e6d4cc"/><rect x="114" y="6" width="6" height="6" fill="#cfcfd3"/><rect x="120" y="0" width="6" height="6" fill="#d8d8dc"/><rect x="126" y="0" width="6" height="6" fill="#9a9aa0"/><rect x="126" y="6" width="6" height="6" fill="#aab2bb"/><rect x="144" y="0" width="6" height="6" fill="#a39a97"/><rect x="144" y="6" width="6" height="6" fill="#c9ccd2"/><rect x="150" y="0" width="6" height="6" fill="#c8d4ea"/><rect x="150" y="6" width="6" height="6" fill="#7f7a7c"/><rect x="156" y="0" width="6" height="6" fill="#b9c6e0"/><rect x="156" y="6" width="6" height="6" fill="#b0b0b5"/><rect x="162" y="0" width="6" height="6" fill="#9c948f"/><rect x="162" y="6" width="6" height="6" fill="#e6d4cc"/><rect x="168" y="0" width="6" height="6" fill="#7f7a7c"/><rect x="168" y="6" width="6" height="6" fill="#f0dcc0"/><rect x="174" y="0" width="6" height="6" fill="#e6e2dc"/><rect x="174" y="6" width="6" height="6" fill="#c4c4c8"/><rect x="192" y="6" width="6" height="6" fill="#b9c6e0"/><rect x="198" y="0" width="6" height="6" fill="#b0b0b5"/><rect x="198" y="6" width="6" height="6" fill="#eadcc8"/><rect x="204" y="0" width="6" height="6" fill="#e6e2dc"/><rect x="210" y="0" width="6" height="6" fill="#d6d0cc"/><rect x="216" y="0" width="6" height="6" fill="#c8d4ea"/><rect x="216" y="6" width="6" height="6" fill="#c4c4c8"/><rect x="222" y="0" width="6" height="6" fill="#f2e8d4"/><rect x="222" y="6" width="6" height="6" fill="#e6e2dc"/><rect x="240" y="0" width="6" height="6" fill="#aab2bb"/><rect x="240" y="6" width="6" height="6" fill="#a39a97"/><rect x="246" y="0" width="6" height="6" fill="#e2e2e5"/><rect x="246" y="6" width="6" height="6" fill="#aab2bb"/><rect x="252" y="0" width="6" height="6" fill="#7f7a7c"/><rect x="252" y="6" width="6" height="6" fill="#8f96a0"/></svg><div class="t" style="right:530.97px;top:827.10px;font-size:14px;color:#333;font-weight:normal;letter-spacing:1.325px;-webkit-text-stroke:0.2px #333">1.000,00</div><div class="t" style="right:382.27px;top:827.10px;font-size:14px;color:#333;font-weight:normal;letter-spacing:1.325px;-webkit-text-stroke:0.2px #333">1.000,00</div><div class="r" style="left:1555px;top:821.5px;width:113px;height:25px;background:#fdf1c9;border-radius:3px"></div><div class="t" style="left:1579.0px;top:827.02px;font-size:13.5px;color:#6b4200;font-weight:normal;letter-spacing:0.125px;-webkit-text-stroke:0.45px #6b4200">Em Aberto</div><svg style="left:1728px;top:827px" width="20" height="18" viewBox="0 0 20 18" fill="none" stroke="#2a84e0" stroke-width="1.4" stroke-linejoin="round" stroke-linecap="round"><path d="M3.4 12.3C1.9 11.1 1.2 9.6 1.2 8C1.2 4.3 5 1.3 9.8 1.3C14.6 1.3 18.4 4.3 18.4 8C18.4 11.7 14.6 14.6 9.8 14.6C8.4 14.6 7.2 14.3 6 14.2L1.6 15.7Z"/><path d="M7 8L8.6 9.8L12.7 6.4"/></svg><div class="r" style="left:1764px;top:821px;width:83px;height:26px;background:#eff2f8;border:1px solid #c9d1dc;border-radius:3px"></div><div class="t" style="left:1774.4px;top:826.60px;font-size:14px;color:#1d4c99;font-weight:bold;letter-spacing:-0.35px;">Ações</div><svg style="left:1824px;top:831px" width="13" height="9" viewBox="0 0 13 9"><path d="M1 1.5L6.5 7L12 1.5" stroke="#1d4c99" stroke-width="1.8" fill="none"/></svg><div class="r" style="left:336px;top:868px;width:1529px;height:68px;background:#ffffff;"></div><div class="r" style="left:336px;top:868px;width:5px;height:69px;background:#d8232a;"></div><div class="r" style="left:361px;top:892px;width:18px;height:17px;background:#fff;border:1.5px solid #2a84e0;border-radius:3px"></div><div class="t" style="left:407.1px;top:895.10px;font-size:14px;color:#333;font-weight:normal;letter-spacing:1.733px;-webkit-text-stroke:0.2px #333">01/11/2024</div><div class="t" style="left:528.2px;top:895.10px;font-size:14px;color:#333;font-weight:normal;letter-spacing:1.733px;-webkit-text-stroke:0.2px #333">01/11/2024</div><div class="r" style="left:670px;top:868px;width:432px;height:68px;background:#ffffff;"></div><svg style="left:671px;top:888px" width="234" height="12"><rect x="0" y="0" width="6" height="6" fill="#6e6870"/><rect x="6" y="0" width="6" height="6" fill="#dfe0e4"/><rect x="12" y="0" width="6" height="6" fill="#8c8c90"/><rect x="0" y="6" width="6" height="6" fill="#9a9a9e"/><rect x="6" y="6" width="6" height="6" fill="#a8a8ac"/><rect x="12" y="6" width="6" height="6" fill="#5f585e"/><rect x="30" y="0" width="6" height="6" fill="#d0d0e8"/><rect x="36" y="0" width="6" height="6" fill="#a39a97"/><rect x="36" y="6" width="6" height="6" fill="#8e8e94"/><rect x="42" y="0" width="6" height="6" fill="#aab2bb"/><rect x="42" y="6" width="6" height="6" fill="#d8d8dc"/><rect x="48" y="0" width="6" height="6" fill="#b9c6e0"/><rect x="48" y="6" width="6" height="6" fill="#a39a97"/><rect x="54" y="0" width="6" height="6" fill="#9a9aa0"/><rect x="54" y="6" width="6" height="6" fill="#a39a97"/><rect x="60" y="0" width="6" height="6" fill="#c9ccd2"/><rect x="60" y="6" width="6" height="6" fill="#8f96a0"/><rect x="72" y="0" width="6" height="6" fill="#c9ccd2"/><rect x="72" y="6" width="6" height="6" fill="#e6e2dc"/><rect x="78" y="0" width="6" height="6" fill="#a39a97"/><rect x="84" y="0" width="6" height="6" fill="#c4c4c8"/><rect x="84" y="6" width="6" height="6" fill="#a39a97"/><rect x="90" y="0" width="6" height="6" fill="#b9c6e0"/><rect x="90" y="6" width="6" height="6" fill="#e6e2dc"/><rect x="96" y="0" width="6" height="6" fill="#cfcfd3"/><rect x="96" y="6" width="6" height="6" fill="#9a9aa0"/><rect x="102" y="0" width="6" height="6" fill="#c8d4ea"/><rect x="102" y="6" width="6" height="6" fill="#8e8e94"/><rect x="108" y="0" width="6" height="6" fill="#c4c4c8"/><rect x="114" y="0" width="6" height="6" fill="#8e8e94"/><rect x="114" y="6" width="6" height="6" fill="#aab2bb"/><rect x="120" y="0" width="6" height="6" fill="#e6e2dc"/><rect x="120" y="6" width="6" height="6" fill="#cfcfd3"/><rect x="138" y="0" width="6" height="6" fill="#a5a5aa"/><rect x="138" y="6" width="6" height="6" fill="#c4c4c8"/><rect x="144" y="0" width="6" height="6" fill="#7f7a7c"/><rect x="144" y="6" width="6" height="6" fill="#8f96a0"/><rect x="150" y="0" width="6" height="6" fill="#8e8e94"/><rect x="150" y="6" width="6" height="6" fill="#cfcfd3"/><rect x="156" y="0" width="6" height="6" fill="#a5a5aa"/><rect x="156" y="6" width="6" height="6" fill="#e6e2dc"/><rect x="162" y="6" width="6" height="6" fill="#aab2bb"/><rect x="168" y="0" width="6" height="6" fill="#b0b0b5"/><rect x="186" y="0" width="6" height="6" fill="#cfcfd3"/><rect x="186" y="6" width="6" height="6" fill="#a5a5aa"/><rect x="192" y="0" width="6" height="6" fill="#f0dcc0"/><rect x="192" y="6" width="6" height="6" fill="#e2e2e5"/><rect x="198" y="6" width="6" height="6" fill="#d6d0cc"/><rect x="216" y="0" width="6" height="6" fill="#aab2bb"/><rect x="216" y="6" width="6" height="6" fill="#eadcc8"/><rect x="222" y="0" width="6" height="6" fill="#a5a5aa"/><rect x="222" y="6" width="6" height="6" fill="#b9c6e0"/><rect x="228" y="0" width="6" height="6" fill="#7f7a7c"/></svg><div class="r" style="left:671px;top:906px;width:126px;height:22px;background:#f5f6f7;border-radius:5px"></div><svg style="left:677px;top:912px" width="114" height="12"><rect x="0" y="0" width="6" height="6" fill="#b9c6e0"/><rect x="6" y="0" width="6" height="6" fill="#b0b0b5"/><rect x="6" y="6" width="6" height="6" fill="#8f96a0"/><rect x="12" y="0" width="6" height="6" fill="#d8d8dc"/><rect x="18" y="0" width="6" height="6" fill="#b0b0b5"/><rect x="18" y="6" width="6" height="6" fill="#f2e8d4"/><rect x="24" y="0" width="6" height="6" fill="#b0b0b5"/><rect x="24" y="6" width="6" height="6" fill="#8f96a0"/><rect x="30" y="0" width="6" height="6" fill="#d4e8f4"/><rect x="30" y="6" width="6" height="6" fill="#b0b0b5"/><rect x="36" y="0" width="6" height="6" fill="#a5a5aa"/><rect x="42" y="6" width="6" height="6" fill="#a39a97"/><rect x="48" y="0" width="6" height="6" fill="#7f7a7c"/><rect x="48" y="6" width="6" height="6" fill="#eadcc8"/><rect x="66" y="0" width="6" height="6" fill="#8f96a0"/><rect x="66" y="6" width="6" height="6" fill="#cfcfd3"/><rect x="72" y="0" width="6" height="6" fill="#9a9aa0"/><rect x="72" y="6" width="6" height="6" fill="#cfcfd3"/><rect x="78" y="0" width="6" height="6" fill="#c4c4c8"/><rect x="78" y="6" width="6" height="6" fill="#e6d4cc"/><rect x="84" y="0" width="6" height="6" fill="#c4c4c8"/><rect x="84" y="6" width="6" height="6" fill="#8f96a0"/><rect x="96" y="0" width="6" height="6" fill="#f2e8d4"/><rect x="102" y="0" width="6" height="6" fill="#a39a97"/><rect x="108" y="0" width="6" height="6" fill="#e2e2e5"/><rect x="108" y="6" width="6" height="6" fill="#d0d0e8"/></svg><div class="t" style="right:530.97px;top:895.10px;font-size:14px;color:#333;font-weight:normal;letter-spacing:1.325px;-webkit-text-stroke:0.2px #333">5,34</div><div class="t" style="right:382.27px;top:895.10px;font-size:14px;color:#333;font-weight:normal;letter-spacing:1.325px;-webkit-text-stroke:0.2px #333">5,34</div><div class="r" style="left:1555px;top:889.5px;width:113px;height:25px;background:#fdf1c9;border-radius:3px"></div><div class="t" style="left:1579.0px;top:895.02px;font-size:13.5px;color:#6b4200;font-weight:normal;letter-spacing:0.125px;-webkit-text-stroke:0.45px #6b4200">Em Aberto</div><svg style="left:1728px;top:895px" width="20" height="18" viewBox="0 0 20 18" fill="none" stroke="#2a84e0" stroke-width="1.4" stroke-linejoin="round" stroke-linecap="round"><path d="M3.4 12.3C1.9 11.1 1.2 9.6 1.2 8C1.2 4.3 5 1.3 9.8 1.3C14.6 1.3 18.4 4.3 18.4 8C18.4 11.7 14.6 14.6 9.8 14.6C8.4 14.6 7.2 14.3 6 14.2L1.6 15.7Z"/><path d="M7 8L8.6 9.8L12.7 6.4"/></svg><div class="r" style="left:1764px;top:889px;width:83px;height:26px;background:#eff2f8;border:1px solid #c9d1dc;border-radius:3px"></div><div class="t" style="left:1774.4px;top:894.60px;font-size:14px;color:#1d4c99;font-weight:bold;letter-spacing:-0.35px;">Ações</div><svg style="left:1824px;top:899px" width="13" height="9" viewBox="0 0 13 9"><path d="M1 1.5L6.5 7L12 1.5" stroke="#1d4c99" stroke-width="1.8" fill="none"/></svg><div class="r" style="left:336px;top:460px;width:338px;height:1px;background:#d3dbe5;"></div><div class="r" style="left:1101px;top:460px;width:764px;height:1px;background:#d3dbe5;"></div><div class="r" style="left:336px;top:528px;width:338px;height:1px;background:#d3dbe5;"></div><div class="r" style="left:1101px;top:528px;width:764px;height:1px;background:#d3dbe5;"></div><div class="r" style="left:336px;top:596px;width:338px;height:1px;background:#d3dbe5;"></div><div class="r" style="left:1101px;top:596px;width:764px;height:1px;background:#d3dbe5;"></div><div class="r" style="left:336px;top:664px;width:338px;height:1px;background:#d3dbe5;"></div><div class="r" style="left:1101px;top:664px;width:764px;height:1px;background:#d3dbe5;"></div><div class="r" style="left:336px;top:732px;width:338px;height:1px;background:#d3dbe5;"></div><div class="r" style="left:1101px;top:732px;width:764px;height:1px;background:#d3dbe5;"></div><div class="r" style="left:336px;top:800px;width:338px;height:1px;background:#d3dbe5;"></div><div class="r" style="left:1101px;top:800px;width:764px;height:1px;background:#d3dbe5;"></div><div class="r" style="left:336px;top:868px;width:338px;height:1px;background:#d3dbe5;"></div><div class="r" style="left:1101px;top:868px;width:764px;height:1px;background:#d3dbe5;"></div><div class="r" style="left:336px;top:936px;width:338px;height:1px;background:#d3dbe5;"></div><div class="r" style="left:1101px;top:936px;width:764px;height:1px;background:#d3dbe5;"></div><div class="r" style="left:336px;top:392px;width:5px;height:69px;background:#d8232a;"></div><div class="r" style="left:336px;top:528px;width:5px;height:69px;background:#d8232a;"></div><div class="r" style="left:336px;top:596px;width:5px;height:69px;background:#d8232a;"></div><div class="r" style="left:336px;top:664px;width:5px;height:69px;background:#d8232a;"></div><div class="r" style="left:336px;top:732px;width:5px;height:69px;background:#d8232a;"></div><div class="r" style="left:336px;top:800px;width:5px;height:69px;background:#d8232a;"></div><div class="r" style="left:336px;top:868px;width:5px;height:69px;background:#d8232a;"></div><div class="r" style="left:674px;top:458px;width:427px;height:6px;background:#edf0f4;border-radius:3px"></div><div class="r" style="left:674px;top:594px;width:427px;height:6px;background:#edf0f4;border-radius:3px"></div><div class="r" style="left:674px;top:662px;width:427px;height:6px;background:#edf0f4;border-radius:3px"></div><div class="r" style="left:674px;top:798px;width:427px;height:6px;background:#edf0f4;border-radius:3px"></div><div class="r" style="left:674px;top:866px;width:427px;height:6px;background:#edf0f4;border-radius:3px"></div><div class="r" style="left:674px;top:934px;width:427px;height:6px;background:#edf0f4;border-radius:3px"></div><div class="r" style="left:1902px;top:69px;width:1px;height:182px;background:#8a8a8a;"></div></body></html>
